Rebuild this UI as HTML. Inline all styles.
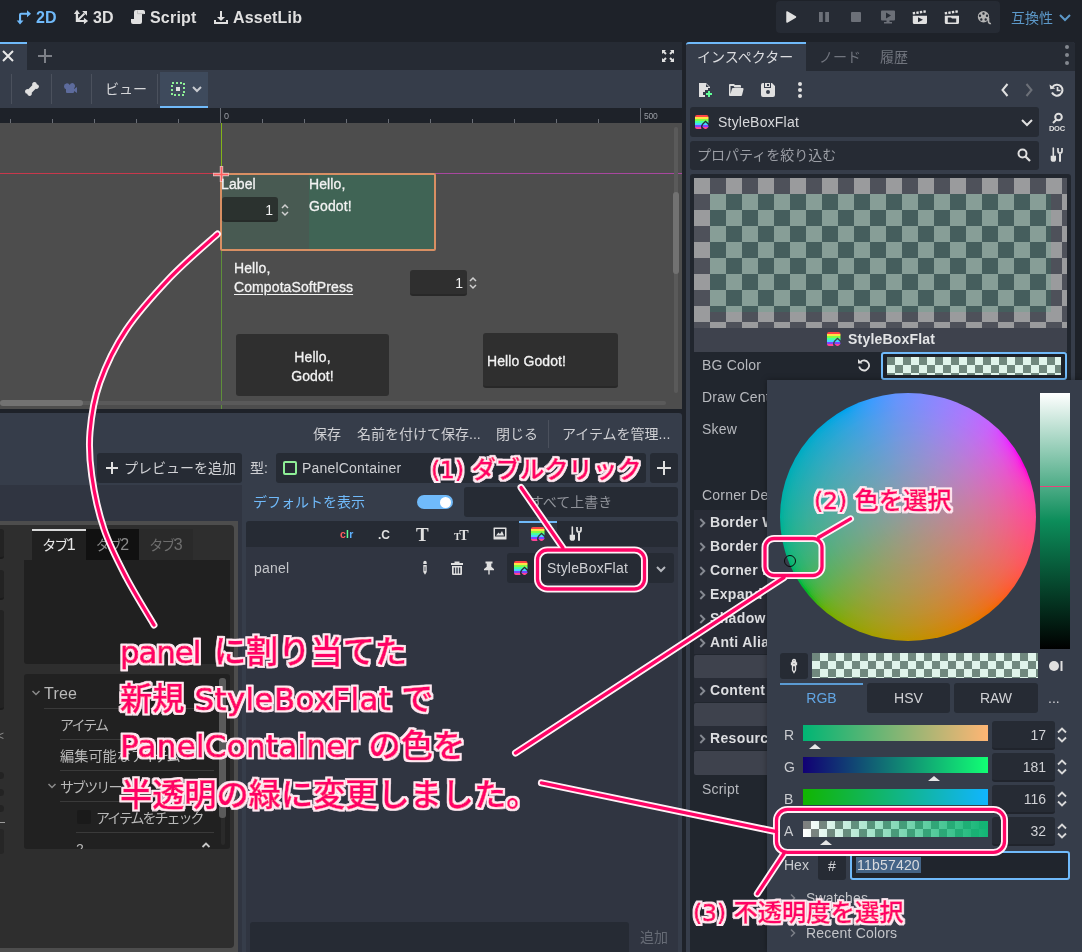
<!DOCTYPE html>
<html lang="ja"><head><meta charset="utf-8"><title>Godot StyleBoxFlat</title>
<style>
html,body{margin:0;padding:0}
body{width:1082px;height:952px;overflow:hidden;background:#1e2229;position:relative;font-family:"Liberation Sans","Noto Sans CJK JP",sans-serif;font-size:14px;color:#d5d6d9}
div,svg{position:absolute;box-sizing:border-box}
.t{white-space:nowrap}
.clip{overflow:hidden}
svg{overflow:visible}
svg text{font-family:"Liberation Sans","Noto Sans CJK JP",sans-serif}
</style></head><body><div id="root" style="left:0;top:0;width:1082px;height:952px;will-change:transform">
<svg style="left:15px;top:9px;" width="16" height="16" viewBox="0 0 16 16"><path d="M12 1.200l4 3.500-4 3.500V5.800H6.100v5.700H8.500L5 15.400 1.700 11.500H4V5.700a2 2 0 0 1 2-2h6z" fill="#70bafa"/></svg>
<div class="t" style="top:7.0px;height:22px;line-height:22px;font-size:16px;color:#70bafa;font-weight:700;left:36px;">2D</div>
<svg style="left:73px;top:9px;" width="16" height="16" viewBox="0 0 16 16"><path d="M4 .700L.900 5h1.900v8h8.100v2.300L15.100 12l-4.200-3.200v2.100H5.100V5H7z" fill="#e0e0e0"/><path d="M5 11l6.500-6.500" stroke="#e0e0e0" stroke-width="2"/><path d="M14 1.900H9.100L14 6.800z" fill="#e0e0e0"/></svg>
<div class="t" style="top:7.0px;height:22px;line-height:22px;font-size:16px;color:#e0e0e0;font-weight:700;left:93px;">3D</div>
<svg style="left:130px;top:9px;" width="16" height="16" viewBox="0 0 16 16"><path d="M6 1a2 2 0 0 0-2 2v7H1v3a2 2 0 0 0 2 2h7a2 2 0 0 0 2-2V5h3V3a2 2 0 0 0-2-2z" fill="#e0e0e0"/><path d="M7.500 1.500v3.200H14" stroke="#b5b5b5" stroke-width=".8" fill="none"/></svg>
<div class="t" style="top:7.0px;height:22px;line-height:22px;font-size:16px;color:#e0e0e0;font-weight:700;letter-spacing:.2px;left:150px;">Script</div>
<svg style="left:213px;top:10px;" width="16" height="16" viewBox="0 0 16 16"><path d="M7 1v6H4l4 4 4-4H9V1zM1 10v4h14v-4h-2v2H3v-2z" fill="#e0e0e0"/></svg>
<div class="t" style="top:7.0px;height:22px;line-height:22px;font-size:16px;color:#e0e0e0;font-weight:700;letter-spacing:.2px;left:233px;">AssetLib</div>
<div style="left:776px;top:1px;width:224px;height:32px;background:#262b34;border-radius:4px;"></div>
<svg style="left:783px;top:9px;" width="16" height="16" viewBox="0 0 16 16"><path d="M4 3v10l8.500-5z" fill="#e0e0e0" stroke="#e0e0e0" stroke-linejoin="round" stroke-width="1.500"/></svg>
<svg style="left:816px;top:9px;" width="16" height="16" viewBox="0 0 16 16"><path d="M3 3h3.800v10H3zM9.200 3H13v10H9.200z" fill="#6c7078"/></svg>
<svg style="left:848px;top:9px;" width="16" height="16" viewBox="0 0 16 16"><rect x="3" y="3" width="10" height="10" rx="1" fill="#6c7078"/></svg>
<svg style="left:880px;top:9px;" width="16" height="16" viewBox="0 0 16 16"><path d="M1 2.500a1 1 0 0 1 1-1h12a1 1 0 0 1 1 1v8a1 1 0 0 1-1 1H9.500v1.500H12v1.500H4V13h2.500v-1.500H2a1 1 0 0 1-1-1zM6 3.500v6l5-3z" fill="#6c7078"/></svg>
<svg style="left:912px;top:9px;" width="16" height="16" viewBox="0 0 16 16"><g transform="rotate(-9 1 6)"><rect x="1.0" y="3.200" width="2.400" height="2.400" fill="#e0e0e0"/><rect x="4.6" y="3.200" width="2.400" height="2.400" fill="#e0e0e0"/><rect x="8.2" y="3.200" width="2.400" height="2.400" fill="#e0e0e0"/><rect x="11.8" y="3.200" width="2.400" height="2.400" fill="#e0e0e0"/></g><path d="M.800 6.800H15v6.600a1.500 1.500 0 0 1-1.500 1.500H2.300a1.500 1.500 0 0 1-1.500-1.500zM6 8.300v5l5-2.500z" fill="#e0e0e0" fill-rule="evenodd"/></svg>
<svg style="left:944px;top:9px;" width="16" height="16" viewBox="0 0 16 16"><g transform="rotate(-9 1 6)"><rect x="1.0" y="3.200" width="2.400" height="2.400" fill="#e0e0e0"/><rect x="4.6" y="3.200" width="2.400" height="2.400" fill="#e0e0e0"/><rect x="8.2" y="3.200" width="2.400" height="2.400" fill="#e0e0e0"/><rect x="11.8" y="3.200" width="2.400" height="2.400" fill="#e0e0e0"/></g><path d="M.800 6.800H15v6.600a1.500 1.500 0 0 1-1.500 1.500H2.300a1.500 1.500 0 0 1-1.500-1.500zM3.800 8.500v5h8.400v-4H8l-1-1z" fill="#e0e0e0" fill-rule="evenodd"/></svg>
<svg style="left:976px;top:9px;" width="16" height="16" viewBox="0 0 16 16"><path d="M7.500 2a5.700 5.700 0 1 0 0 11.400 5.700 5.700 0 0 0 0-11.400zM7.500 3.300a1.200 1.200 0 1 1 0 2.400 1.200 1.200 0 0 1 0-2.400zM4 5.500a1.200 1.200 0 1 1 0 2.400 1.200 1.200 0 0 1 0-2.400zM11 5.500a1.200 1.200 0 1 1 0 2.400 1.200 1.200 0 0 1 0-2.400zM5.300 9.300a1.200 1.200 0 1 1 0 2.400 1.200 1.200 0 0 1 0-2.400zM9.700 9.300a1.200 1.200 0 1 1 0 2.400 1.200 1.200 0 0 1 0-2.400z" fill="#b4b4b4" fill-rule="evenodd"/><path d="M12.500 9v3.500a2 2 0 0 0 2.500 2" stroke="#b4b4b4" stroke-width="1.600" fill="none"/></svg>
<div class="t" style="top:7.0px;height:22px;line-height:22px;font-size:14px;color:#5c98c8;left:1011px;">互換性</div>
<svg style="left:1058px;top:13px;" width="14" height="10" viewBox="0 0 14 10"><path d="M2 2l5 5 5-5" stroke="#5c98c8" stroke-width="2" fill="none"/></svg>
<div style="left:0px;top:42px;width:682px;height:28px;background:#262b34;"></div>
<div style="left:0px;top:42px;width:27px;height:28px;background:#363d4a;border-top:2px solid #70bafa;"></div>
<svg style="left:1px;top:49px;" width="14" height="14" viewBox="0 0 14 14"><path d="M2 2l10 10M12 2L2 12" stroke="#e8e8e8" stroke-width="2" fill="none"/></svg>
<svg style="left:38px;top:49px;" width="14" height="14" viewBox="0 0 14 14"><path d="M7 0v14M0 7h14" stroke="#7d8087" stroke-width="2" fill="none"/></svg>
<svg style="left:661px;top:49px;" width="14" height="14" viewBox="0 0 14 14"><path d="M1 1h4L3.700 2.300 5.700 4.300 4.300 5.700 2.300 3.700 1 5zM13 1v4l-1.300-1.300-2 2-1.400-1.400 2-2L9 1zM1 13V9l1.300 1.300 2-2 1.400 1.400-2 2L5 13zM13 13H9l1.300-1.300-2-2 1.400-1.400 2 2L13 9z" fill="#e0e0e0"/></svg>
<div style="left:0px;top:70px;width:682px;height:38px;background:#363d4a;"></div>
<div style="left:11px;top:74px;width:1px;height:30px;background:#4b515d;"></div>
<div style="left:51px;top:74px;width:1px;height:30px;background:#4b515d;"></div>
<div style="left:91px;top:74px;width:1px;height:30px;background:#4b515d;"></div>
<div style="left:157px;top:74px;width:1px;height:30px;background:#4b515d;"></div>
<svg style="left:24px;top:81px;" width="16" height="16" viewBox="0 0 16 16"><path d="M10.478 1.001a2.500 2.500 0 0 0-2.210 3.330L4.331 8.268a2.500 2.500 0 0 0-3.330 2.210 2.500 2.500 0 0 0 2.150 2.370 2.500 2.500 0 0 0 2.370 2.150 2.500 2.500 0 0 0 2.210-3.330l3.937-3.937a2.500 2.500 0 0 0 3.330-2.210 2.500 2.500 0 0 0-2.150-2.370 2.500 2.500 0 0 0-2.370-2.150z" fill="#e0e0e0"/></svg>
<svg style="left:63px;top:81px;" width="16" height="16" viewBox="0 0 16 16"><path d="M9.500 2a3 3 0 0 0-2.800 2A3 3 0 0 0 1 5.500a3 3 0 0 0 2 2.800V11a1 1 0 0 0 1 1h6a1 1 0 0 0 1-1v-1l3 2V6l-3 2V7.230A3 3 0 0 0 9.500 2z" fill="#5d6b9c"/></svg>
<div class="t" style="top:79.0px;height:20px;line-height:20px;font-size:14px;color:#d4d5d8;left:105px;">ビュー</div>
<div style="left:160px;top:72px;width:48px;height:36px;background:#3e4a5c;border-bottom:2px solid #70bafa;"></div>
<svg style="left:171px;top:82px;" width="14" height="14" viewBox="0 0 14 14"><rect x="1" y="1" width="12" height="12" fill="none" stroke="#8eef97" stroke-width="2" stroke-dasharray="2 2"/><rect x="5" y="5" width="4" height="4" fill="#e0e0e0"/></svg>
<svg style="left:191px;top:85px;" width="12" height="8" viewBox="0 0 12 8"><path d="M2 2l4 4 4-4" stroke="#c8cbd0" stroke-width="2" fill="none"/></svg>
<div style="left:0px;top:108px;width:682px;height:15px;background:#1e2229;"></div>
<div style="left:10px;top:119px;width:1px;height:4px;background:#6b6f77;"></div>
<div style="left:52px;top:119px;width:1px;height:4px;background:#6b6f77;"></div>
<div style="left:94px;top:119px;width:1px;height:4px;background:#6b6f77;"></div>
<div style="left:136px;top:119px;width:1px;height:4px;background:#6b6f77;"></div>
<div style="left:178px;top:119px;width:1px;height:4px;background:#6b6f77;"></div>
<div style="left:220px;top:108px;width:1px;height:15px;background:#6b6f77;"></div>
<div style="left:262px;top:119px;width:1px;height:4px;background:#6b6f77;"></div>
<div style="left:304px;top:119px;width:1px;height:4px;background:#6b6f77;"></div>
<div style="left:346px;top:119px;width:1px;height:4px;background:#6b6f77;"></div>
<div style="left:388px;top:119px;width:1px;height:4px;background:#6b6f77;"></div>
<div style="left:430px;top:119px;width:1px;height:4px;background:#6b6f77;"></div>
<div style="left:472px;top:119px;width:1px;height:4px;background:#6b6f77;"></div>
<div style="left:514px;top:119px;width:1px;height:4px;background:#6b6f77;"></div>
<div style="left:556px;top:119px;width:1px;height:4px;background:#6b6f77;"></div>
<div style="left:598px;top:119px;width:1px;height:4px;background:#6b6f77;"></div>
<div style="left:640px;top:108px;width:1px;height:15px;background:#6b6f77;"></div>
<div class="t" style="top:111.0px;height:10px;line-height:10px;font-size:9px;color:#9b9ea5;left:224px;">0</div>
<div class="t" style="top:111.0px;height:10px;line-height:10px;font-size:8.5px;color:#9b9ea5;left:644px;letter-spacing:-.2px;">500</div>
<div class="clip" style="left:0px;top:123px;width:682px;height:286px;background:#4d4d4d;"></div>
<div style="left:0px;top:173px;width:221px;height:1px;background:#c8384c;"></div>
<div style="left:435px;top:173px;width:247px;height:1px;background:#a8479f;"></div>
<div style="left:221px;top:123px;width:1px;height:286px;background:#5f8f3a;"></div>
<div style="left:221px;top:123px;width:1px;height:50px;background:#83b319;"></div>
<div style="left:221px;top:174px;width:214px;height:76px;background:#485a52;"></div>
<div style="left:309px;top:174px;width:126px;height:76px;background:#406455;"></div>
<div style="left:220px;top:173px;width:216px;height:78px;border:2px solid #d88f63;border-radius:2px;"></div>
<svg style="left:213px;top:166px;" width="16" height="16" viewBox="0 0 16 16"><path d="M8.500 0v16M0 8.500h16" stroke="#ffd9d9" stroke-opacity=".8" stroke-width="3.400"/><path d="M8.500 .700v14.600M.700 8.500h14.600" stroke="#ff5f5f" stroke-width="1.600"/></svg>
<div class="t" style="top:175.0px;height:18px;line-height:18px;font-size:14px;color:#f2f2f2;left:221px;letter-spacing:.1px;-webkit-text-stroke:.3px #f2f2f2;">Label</div>
<div class="t" style="top:175.0px;height:18px;line-height:18px;font-size:14px;color:#f2f2f2;left:309px;letter-spacing:.1px;-webkit-text-stroke:.3px #f2f2f2;">Hello,</div>
<div class="t" style="top:197.0px;height:18px;line-height:18px;font-size:14px;color:#f2f2f2;left:309px;letter-spacing:.1px;-webkit-text-stroke:.3px #f2f2f2;">Godot!</div>
<div style="left:222px;top:197px;width:56px;height:25px;background:#2b322f;border-radius:3px;border-bottom:2px solid #262b29;"></div>
<div class="t" style="top:201.0px;height:18px;line-height:18px;font-size:14px;color:#f2f2f2;right:809px;text-align:right;">1</div>
<svg style="left:280px;top:203px;" width="10" height="14" viewBox="0 0 10 14"><path d="M2 5l3-3 3 3M2 9l3 3 3-3" stroke="#d0d0d0" stroke-width="1.500" fill="none"/></svg>
<div class="t" style="top:259.0px;height:18px;line-height:18px;font-size:14px;color:#f2f2f2;left:234px;letter-spacing:.1px;-webkit-text-stroke:.3px #f2f2f2;">Hello,</div>
<div class="t" style="top:278.0px;height:18px;line-height:18px;font-size:14px;color:#f2f2f2;left:234px;text-decoration:underline;text-underline-offset:2px;letter-spacing:.1px;-webkit-text-stroke:.3px #f2f2f2;">CompotaSoftPress</div>
<div style="left:410px;top:270px;width:57px;height:26px;background:#2f2f2f;border-radius:3px;border-bottom:2px solid #282828;"></div>
<div class="t" style="top:274.0px;height:18px;line-height:18px;font-size:14px;color:#f2f2f2;right:619px;text-align:right;">1</div>
<svg style="left:468px;top:276px;" width="10" height="14" viewBox="0 0 10 14"><path d="M2 5l3-3 3 3M2 9l3 3 3-3" stroke="#d0d0d0" stroke-width="1.500" fill="none"/></svg>
<div style="left:236px;top:334px;width:153px;height:62px;background:#2f2f2f;border-radius:3px;"></div>
<div class="t" style="top:348.0px;height:18px;line-height:18px;font-size:14px;color:#f2f2f2;left:112.5px;width:400px;text-align:center;letter-spacing:.1px;-webkit-text-stroke:.3px #f2f2f2;">Hello,</div>
<div class="t" style="top:367.0px;height:18px;line-height:18px;font-size:14px;color:#f2f2f2;left:112.5px;width:400px;text-align:center;letter-spacing:.1px;-webkit-text-stroke:.3px #f2f2f2;">Godot!</div>
<div style="left:483px;top:333px;width:135px;height:55px;background:#2f2f2f;border-radius:3px;border-bottom:2px solid #282828;"></div>
<div class="t" style="top:352.0px;height:18px;line-height:18px;font-size:14px;color:#f2f2f2;left:487px;letter-spacing:.1px;-webkit-text-stroke:.3px #f2f2f2;">Hello Godot!</div>
<div style="left:674px;top:127px;width:4px;height:266px;background:#5a5a5a;border-radius:2px;"></div>
<div style="left:673px;top:192px;width:6px;height:82px;background:#727272;border-radius:3px;"></div>
<div style="left:0px;top:401px;width:666px;height:4px;background:#5a5a5a;border-radius:2px;"></div>
<div style="left:0px;top:400px;width:83px;height:6px;background:#727272;border-radius:3px;"></div>
<div style="left:0px;top:413px;width:682px;height:545px;background:#363d4a;border-radius:0 3px 0 0;"></div>
<div class="t" style="top:424.0px;height:20px;line-height:20px;font-size:14px;color:#cfd0d4;left:313px;">保存</div>
<div class="t" style="top:424.0px;height:20px;line-height:20px;font-size:14px;color:#cfd0d4;left:357px;">名前を付けて保存...</div>
<div class="t" style="top:424.0px;height:20px;line-height:20px;font-size:14px;color:#cfd0d4;left:496px;">閉じる</div>
<div style="left:548px;top:420px;width:1px;height:28px;background:#4b515d;"></div>
<div class="t" style="top:424.0px;height:20px;line-height:20px;font-size:14px;color:#cfd0d4;left:562px;">アイテムを管理...</div>
<div style="left:0px;top:485px;width:242px;height:467px;background:#303541;"></div>
<div style="left:97px;top:453px;width:145px;height:30px;background:#262b34;border-radius:3px;"></div>
<svg style="left:105px;top:461px;" width="14" height="14" viewBox="0 0 14 14"><path d="M7 1v12M1 7h12" stroke="#e0e0e0" stroke-width="2" fill="none"/></svg>
<div class="t" style="top:458.0px;height:20px;line-height:20px;font-size:14px;color:#cfd0d4;left:124px;">プレビューを追加</div>
<div style="left:0px;top:521px;width:238px;height:431px;background:#4d4d4d;"></div>
<div style="left:0px;top:525px;width:234px;height:423px;background:#2e2e2e;border-radius:0 4px 4px 0;"></div>
<div style="left:-4px;top:529px;width:8px;height:30px;background:#232323;border-radius:3px;border-bottom:2px solid #1c1c1c;"></div>
<div style="left:-4px;top:570px;width:8px;height:30px;background:#232323;border-radius:3px;border-bottom:2px solid #1c1c1c;"></div>
<div style="left:-4px;top:610px;width:8px;height:100px;background:#232323;border-radius:3px;border-bottom:2px solid #1c1c1c;"></div>
<div class="t" style="top:729.0px;height:14px;line-height:14px;font-size:12px;color:#8a8a8a;letter-spacing:.2px;left:-3px;">&lt;</div>
<div style="left:-4px;top:772.0px;width:8px;height:7px;background:#232323;border-radius:4px;"></div>
<div style="left:-4px;top:788.5px;width:8px;height:7px;background:#232323;border-radius:4px;"></div>
<div style="left:-4px;top:804.5px;width:8px;height:7px;background:#232323;border-radius:4px;"></div>
<div style="left:0px;top:821.5px;width:5px;height:1px;background:#9a9a9a;"></div>
<div style="left:-4px;top:829px;width:8px;height:25px;background:#262626;border-radius:3px;"></div>
<div style="left:32px;top:529px;width:54px;height:31px;background:#202020;border-top:2px solid #d8d8d8;"></div>
<div style="left:86px;top:529px;width:53px;height:31px;background:#111111;"></div>
<div style="left:139px;top:529px;width:54px;height:31px;background:#2a2a2a;"></div>
<div class="t" style="top:534.0px;height:22px;line-height:22px;font-size:14px;color:#e8e8e8;left:29.0px;width:60px;text-align:center;"><span style="letter-spacing:-1.800px">タブ</span><span style="font-size:16px">1</span></div>
<div class="t" style="top:534.0px;height:22px;line-height:22px;font-size:14px;color:#8a8a8a;left:82.5px;width:60px;text-align:center;"><span style="letter-spacing:-1.800px">タブ</span><span style="font-size:16px">2</span></div>
<div class="t" style="top:534.0px;height:22px;line-height:22px;font-size:14px;color:#6e6e6e;left:136.0px;width:60px;text-align:center;"><span style="letter-spacing:-1.800px">タブ</span><span style="font-size:16px">3</span></div>
<div style="left:24px;top:560px;width:206px;height:104px;background:#202020;border-radius:0 0 3px 3px;"></div>
<div class="clip" style="left:24px;top:674px;width:206px;height:175px;background:#212121;border-radius:3px;"><div class="t" style="left:52px;top:164px;height:22px;line-height:22px;font-size:14px;color:#b9b9b9">2</div></div>
<svg style="left:31px;top:689px;" width="10" height="8" viewBox="0 0 10 8"><path d="M1.500 2l3.500 3.500L8.500 2" stroke="#8a8a8a" stroke-width="1.500" fill="none"/></svg>
<div class="t" style="top:683.0px;height:22px;line-height:22px;font-size:16px;color:#b9b9b9;letter-spacing:.2px;left:44px;">Tree</div>
<div class="t" style="top:714.0px;height:22px;line-height:22px;font-size:14px;color:#b9b9b9;left:60px;letter-spacing:-1.9px;">アイテム</div>
<div class="t" style="top:745.0px;height:22px;line-height:22px;font-size:14.2px;color:#b9b9b9;left:60px;">編集可能な<span style="letter-spacing:-1.9px">アイテム</span></div>
<svg style="left:47px;top:782px;" width="10" height="8" viewBox="0 0 10 8"><path d="M1.500 2l3.500 3.500L8.500 2" stroke="#8a8a8a" stroke-width="1.500" fill="none"/></svg>
<div class="t" style="top:776.0px;height:22px;line-height:22px;font-size:14px;color:#b9b9b9;left:60px;letter-spacing:-1.9px;">サブツリー</div>
<div style="left:77px;top:810px;width:14px;height:14px;background:#1a1a1a;border-radius:2px;"></div>
<div class="t" style="top:807.0px;height:22px;line-height:22px;font-size:14px;color:#b9b9b9;left:96px;letter-spacing:-2px;">アイテムをチェック</div>
<div style="left:44px;top:708px;width:170px;height:1px;background:#3a3a3a;"></div>
<div style="left:60px;top:739px;width:154px;height:1px;background:#3a3a3a;"></div>
<div style="left:60px;top:770px;width:154px;height:1px;background:#3a3a3a;"></div>
<div style="left:60px;top:801px;width:154px;height:1px;background:#3a3a3a;"></div>
<div style="left:76px;top:832px;width:138px;height:1px;background:#3a3a3a;"></div>
<svg style="left:201px;top:841px;" width="10" height="8" viewBox="0 0 10 8"><path d="M1.500 6l3.500-3.500L8.500 6" stroke="#c8c8c8" stroke-width="1.800" fill="none"/></svg>
<div style="left:221px;top:680px;width:4px;height:165px;background:#2a2a2a;border-radius:2px;"></div>
<div style="left:219px;top:678px;width:7px;height:140px;background:#5a5a5a;border-radius:3px;"></div>
<div class="t" style="top:458.0px;height:20px;line-height:20px;font-size:14px;color:#cfd0d4;left:250px;">型:</div>
<div style="left:276px;top:453px;width:370px;height:30px;background:#262b34;border-radius:3px;"></div>
<div style="left:283px;top:461px;width:14px;height:14px;border:2px solid #8eef97;border-radius:2px;"></div>
<div class="t" style="top:458.0px;height:20px;line-height:20px;font-size:14px;color:#cfd0d4;letter-spacing:.2px;left:302px;">PanelContainer</div>
<div style="left:650px;top:453px;width:28px;height:30px;background:#262b34;border-radius:3px;"></div>
<svg style="left:657px;top:461px;" width="14" height="14" viewBox="0 0 14 14"><path d="M7 0v14M0 7h14" stroke="#e0e0e0" stroke-width="2" fill="none"/></svg>
<div class="t" style="top:492.0px;height:20px;line-height:20px;font-size:14px;color:#70bafa;left:253px;">デフォルトを表示</div>
<div style="left:417px;top:495px;width:36px;height:14px;background:#70bafa;border-radius:7px;"></div>
<div style="left:440px;top:496.5px;width:11px;height:11px;background:#ffffff;border-radius:6px;"></div>
<div style="left:464px;top:487px;width:214px;height:30px;background:#262b34;border-radius:3px;"></div>
<div class="t" style="top:492.0px;height:20px;line-height:20px;font-size:14px;color:#8f9299;left:471.0px;width:200px;text-align:center;">すべて上書き</div>
<div style="left:246px;top:521px;width:432px;height:26px;background:#262b34;border-radius:3px 3px 0 0;"></div>
<div style="left:246px;top:547px;width:432px;height:405px;background:#303541;"></div>
<div style="left:519px;top:521px;width:38px;height:26px;background:#303541;border-top:2px solid #70bafa;"></div>
<svg style="left:340px;top:526px;" width="16" height="16" viewBox="0 0 16 16"><text x="0" y="12" font-size="10.500" font-weight="700" letter-spacing="0.2"><tspan fill="#ff5f5f">c</tspan><tspan fill="#5fff97">l</tspan><tspan fill="#5fb2ff">r</tspan></text></svg>
<svg style="left:378px;top:526px;" width="16" height="16" viewBox="0 0 16 16"><text x="0" y="13" font-size="12" font-weight="700" fill="#e0e0e0">.C</text></svg>
<svg style="left:416px;top:526px;" width="16" height="16" viewBox="0 0 16 16"><text x="0" y="14.500" font-size="19" font-weight="700" style="font-family:'Liberation Serif',serif" fill="#e0e0e0">T</text></svg>
<svg style="left:454px;top:526px;" width="16" height="16" viewBox="0 0 16 16"><text x="0" y="14" style="font-family:'Liberation Serif',serif" fill="#e0e0e0"><tspan font-size="10" font-weight="700">T</tspan><tspan font-size="14" dx="-1.500" font-weight="700">T</tspan></text></svg>
<svg style="left:492px;top:526px;" width="16" height="16" viewBox="0 0 16 16"><path d="M2 1.500h12a.5.5 0 0 1 .5.500v11a.5.500 0 0 1-.5.500H2a.5.500 0 0 1-.5-.5V2a.5.500 0 0 1 .5-.5zM3 3v7.500h10V3zM4 9.500l2.500-3 1.500 1.500 2-3 2 4.500z" fill="#e0e0e0" fill-rule="evenodd"/></svg>
<svg style="left:530px;top:526px;" width="16" height="16" viewBox="0 0 16 16"><defs><clipPath id="sa530526"><path d="M3 1a2 2 0 0 0-2 2v10a2 2 0 0 0 2 2h4.586a4.500 4.500 0 0 1-.586-2.216 4.500 4.500 0 0 1 1.318-3.182L11.500 6.420l2.682 2.682a4.500 4.500 0 0 1 .318.357V3a2 2 0 0 0-2-2z"/></clipPath><clipPath id="sb530526"><path d="M11.500 8.200L9.530 10.170a2.790 2.790 0 0 0 0 3.940 2.790 2.790 0 0 0 3.940 0 2.790 2.790 0 0 0 0-3.940z"/></clipPath></defs><g clip-path="url(#sa530526)"><path d="M1 1h14v2.100H1z" fill="#ff4545"/><path d="M1 3h14v2.100H1z" fill="#ffe345"/><path d="M1 5h14v2.100H1z" fill="#80ff45"/><path d="M1 7h14v2.100H1z" fill="#45ffa2"/><path d="M1 9h14v2.100H1z" fill="#45d7ff"/><path d="M1 11h14v2.100H1z" fill="#8045ff"/><path d="M1 13h14v2.100H1z" fill="#ff4596"/></g><g clip-path="url(#sb530526)"><path d="M1 1h14v2.100H1z" fill="#ff4545"/><path d="M1 3h14v2.100H1z" fill="#ffe345"/><path d="M1 5h14v2.100H1z" fill="#80ff45"/><path d="M1 7h14v2.100H1z" fill="#45ffa2"/><path d="M1 9h14v2.100H1z" fill="#45d7ff"/><path d="M1 11h14v2.100H1z" fill="#8045ff"/><path d="M1 13h14v2.100H1z" fill="#ff4596"/></g></svg>
<svg style="left:568px;top:526px;" width="16" height="16" viewBox="0 0 16 16"><path d="M4.300 1v8" stroke="#e0e0e0" stroke-width="1.600" stroke-linecap="round"/><path d="M1.700 8.800h5.300v3.400a2.600 2.600 0 0 1-5.300 0z" fill="#e0e0e0"/><path d="M11 6.500v8.200" stroke="#e0e0e0" stroke-width="2"/><path d="M9 1v3a2 2 0 0 0 4 0V1" stroke="#e0e0e0" stroke-width="1.700" fill="none"/></svg>
<div class="t" style="top:558.0px;height:20px;line-height:20px;font-size:14px;color:#c3c5c9;letter-spacing:.2px;left:254px;">panel</div>
<svg style="left:417px;top:560px;" width="16" height="16" viewBox="0 0 16 16"><path d="M6.300 2.500a1.700 1.700 0 0 1 3.400 0V4H6.300zM6.300 5h3.400v7L8 14.800 6.300 12zM7.600 6.500v4.500h.8V6.500z" fill="#e0e0e0" fill-rule="evenodd"/></svg>
<svg style="left:449px;top:560px;" width="16" height="16" viewBox="0 0 16 16"><path d="M5.500 1.500h5v1.500h3.500v2H2V3h3.500zM3 6h10v8a1 1 0 0 1-1 1H4a1 1 0 0 1-1-1zM4.700 7.500v6h1.400v-6zM7.300 7.500v6h1.400v-6zM9.900 7.500v6h1.400v-6z" fill="#e0e0e0" fill-rule="evenodd"/></svg>
<svg style="left:481px;top:560px;" width="16" height="16" viewBox="0 0 16 16"><path d="M4.500 1.500h7v2h-1.200v3.300L13 9v1.300H8.700V14.500h-1.400V10.300H3V9l2.700-2.200V3.500H4.500z" fill="#e0e0e0"/></svg>
<div style="left:507px;top:553px;width:167px;height:30px;background:#262b34;border-radius:3px;"></div>
<svg style="left:513px;top:560px;" width="16" height="16" viewBox="0 0 16 16"><defs><clipPath id="sa513560"><path d="M3 1a2 2 0 0 0-2 2v10a2 2 0 0 0 2 2h4.586a4.500 4.500 0 0 1-.586-2.216 4.500 4.500 0 0 1 1.318-3.182L11.500 6.420l2.682 2.682a4.500 4.500 0 0 1 .318.357V3a2 2 0 0 0-2-2z"/></clipPath><clipPath id="sb513560"><path d="M11.500 8.200L9.530 10.170a2.790 2.790 0 0 0 0 3.940 2.790 2.790 0 0 0 3.940 0 2.790 2.790 0 0 0 0-3.940z"/></clipPath></defs><g clip-path="url(#sa513560)"><path d="M1 1h14v2.100H1z" fill="#ff4545"/><path d="M1 3h14v2.100H1z" fill="#ffe345"/><path d="M1 5h14v2.100H1z" fill="#80ff45"/><path d="M1 7h14v2.100H1z" fill="#45ffa2"/><path d="M1 9h14v2.100H1z" fill="#45d7ff"/><path d="M1 11h14v2.100H1z" fill="#8045ff"/><path d="M1 13h14v2.100H1z" fill="#ff4596"/></g><g clip-path="url(#sb513560)"><path d="M1 1h14v2.100H1z" fill="#ff4545"/><path d="M1 3h14v2.100H1z" fill="#ffe345"/><path d="M1 5h14v2.100H1z" fill="#80ff45"/><path d="M1 7h14v2.100H1z" fill="#45ffa2"/><path d="M1 9h14v2.100H1z" fill="#45d7ff"/><path d="M1 11h14v2.100H1z" fill="#8045ff"/><path d="M1 13h14v2.100H1z" fill="#ff4596"/></g></svg>
<div class="t" style="top:558.0px;height:20px;line-height:20px;font-size:14px;color:#cfd0d4;letter-spacing:.2px;left:547px;">StyleBoxFlat</div>
<svg style="left:655px;top:565px;" width="12" height="8" viewBox="0 0 12 8"><path d="M2 2l4 4 4-4" stroke="#b4b7bd" stroke-width="2" fill="none"/></svg>
<div style="left:250px;top:922px;width:379px;height:30px;background:#262b34;border-radius:3px 3px 0 0;"></div>
<div class="t" style="top:927.0px;height:20px;line-height:20px;font-size:14px;color:#666b75;left:640px;">追加</div>
<div style="left:686px;top:42px;width:389px;height:910px;background:#363d4a;border-radius:3px 3px 0 0;"></div>
<div style="left:686px;top:42px;width:389px;height:29px;background:#262b34;border-radius:3px 3px 0 0;"></div>
<div style="left:686px;top:42px;width:120px;height:29px;background:#363d4a;border-top:2px solid #70bafa;border-radius:3px 0 0 0;"></div>
<div class="t" style="top:47.0px;height:20px;line-height:20px;font-size:14px;color:#dcdde0;left:697px;">インスペクター</div>
<div class="t" style="top:47.0px;height:20px;line-height:20px;font-size:14px;color:#71757e;left:819px;">ノード</div>
<div class="t" style="top:47.0px;height:20px;line-height:20px;font-size:14px;color:#71757e;left:880px;">履歴</div>
<div style="left:1065px;top:45px;width:4px;height:4px;background:#84888f;border-radius:2px;"></div>
<div style="left:1065px;top:53px;width:4px;height:4px;background:#84888f;border-radius:2px;"></div>
<div style="left:1065px;top:61px;width:4px;height:4px;background:#84888f;border-radius:2px;"></div>
<svg style="left:697px;top:82px;" width="16" height="16" viewBox="0 0 16 16"><path d="M2 1v14h6v-2H6v-3h2V8h3V6h2V5L9 1zM9 2l3 3H9z" fill="#e0e0e0" fill-rule="evenodd"/><path d="M11 9v2H9v2h2v2h2v-2h2v-2h-2V9z" fill="#5fff97"/></svg>
<svg style="left:728px;top:82px;" width="16" height="16" viewBox="0 0 16 16"><path d="M2 2a1 1 0 0 0-1 1v10a1 1 0 0 0 1 1h11a1 1 0 0 0 1-.8l1.500-6A1 1 0 0 0 14.500 6H5a1 1 0 0 0-1 .8L2.500 12V4h3l1 1.500H13V4a1 1 0 0 0-1-1H7L6 2z" fill="#e0e0e0"/></svg>
<svg style="left:760px;top:82px;" width="16" height="16" viewBox="0 0 16 16"><path d="M3 1a2 2 0 0 0-2 2v10a2 2 0 0 0 2 2h10a2 2 0 0 0 2-2V4l-3-3h-1v5H4V1zM5 1v4h5V1zM7 2h2v2H7zM8 8a2 2 0 1 1 0 4 2 2 0 0 1 0-4z" fill="#e0e0e0" fill-rule="evenodd"/></svg>
<div style="left:798px;top:82px;width:4px;height:4px;background:#e0e0e0;border-radius:2px;"></div>
<div style="left:798px;top:88px;width:4px;height:4px;background:#e0e0e0;border-radius:2px;"></div>
<div style="left:798px;top:94px;width:4px;height:4px;background:#e0e0e0;border-radius:2px;"></div>
<svg style="left:998px;top:82px;" width="14" height="16" viewBox="0 0 14 16"><path d="M9.500 2L4.500 8l5 6" stroke="#e0e0e0" stroke-width="2" fill="none"/></svg>
<svg style="left:1022px;top:82px;" width="14" height="16" viewBox="0 0 14 16"><path d="M4.500 2l5 6-5 6" stroke="#6c7078" stroke-width="2" fill="none"/></svg>
<svg style="left:1049px;top:82px;" width="16" height="16" viewBox="0 0 16 16"><path d="M3.500 5A5.500 5.500 0 1 1 3 10.500" stroke="#e0e0e0" stroke-width="2" fill="none"/><path d="M1 2v5h5z" fill="#e0e0e0" transform="rotate(-10 3 5)"/><path d="M8.500 5v3.500H11.500" stroke="#e0e0e0" stroke-width="1.700" fill="none"/></svg>
<div style="left:690px;top:107px;width:349px;height:30px;background:#262b34;border-radius:3px;"></div>
<svg style="left:694px;top:114px;" width="16" height="16" viewBox="0 0 16 16"><defs><clipPath id="sa694114"><path d="M3 1a2 2 0 0 0-2 2v10a2 2 0 0 0 2 2h4.586a4.500 4.500 0 0 1-.586-2.216 4.500 4.500 0 0 1 1.318-3.182L11.500 6.420l2.682 2.682a4.500 4.500 0 0 1 .318.357V3a2 2 0 0 0-2-2z"/></clipPath><clipPath id="sb694114"><path d="M11.500 8.200L9.530 10.170a2.790 2.790 0 0 0 0 3.940 2.790 2.790 0 0 0 3.940 0 2.790 2.790 0 0 0 0-3.940z"/></clipPath></defs><g clip-path="url(#sa694114)"><path d="M1 1h14v2.100H1z" fill="#ff4545"/><path d="M1 3h14v2.100H1z" fill="#ffe345"/><path d="M1 5h14v2.100H1z" fill="#80ff45"/><path d="M1 7h14v2.100H1z" fill="#45ffa2"/><path d="M1 9h14v2.100H1z" fill="#45d7ff"/><path d="M1 11h14v2.100H1z" fill="#8045ff"/><path d="M1 13h14v2.100H1z" fill="#ff4596"/></g><g clip-path="url(#sb694114)"><path d="M1 1h14v2.100H1z" fill="#ff4545"/><path d="M1 3h14v2.100H1z" fill="#ffe345"/><path d="M1 5h14v2.100H1z" fill="#80ff45"/><path d="M1 7h14v2.100H1z" fill="#45ffa2"/><path d="M1 9h14v2.100H1z" fill="#45d7ff"/><path d="M1 11h14v2.100H1z" fill="#8045ff"/><path d="M1 13h14v2.100H1z" fill="#ff4596"/></g></svg>
<div class="t" style="top:112.0px;height:20px;line-height:20px;font-size:14px;color:#d8d9dc;letter-spacing:.2px;left:718px;">StyleBoxFlat</div>
<svg style="left:1020px;top:118px;" width="14" height="9" viewBox="0 0 14 9"><path d="M2 2l5 5 5-5" stroke="#e0e0e0" stroke-width="2" fill="none"/></svg>
<svg style="left:1049px;top:112px;" width="16" height="20" viewBox="0 0 16 20"><circle cx="9.500" cy="5" r="3.300" stroke="#e0e0e0" stroke-width="2" fill="none"/><path d="M7.500 7.500L4 11" stroke="#e0e0e0" stroke-width="2"/><text x="0" y="19" font-size="7.500" font-weight="700" fill="#e0e0e0" letter-spacing="-0.3">DOC</text></svg>
<div style="left:690px;top:141px;width:349px;height:29px;background:#262b34;border-radius:3px;"></div>
<div class="t" style="top:145.0px;height:20px;line-height:20px;font-size:14px;color:#9b9ea5;left:697px;">プロパティを絞り込む</div>
<svg style="left:1016px;top:147px;" width="16" height="16" viewBox="0 0 16 16"><circle cx="6.500" cy="6.500" r="4" stroke="#e0e0e0" stroke-width="2" fill="none"/><path d="M9.500 9.500L14 14" stroke="#e0e0e0" stroke-width="2.300"/></svg>
<svg style="left:1049px;top:147px;" width="16" height="16" viewBox="0 0 16 16"><path d="M4.300 1v8" stroke="#e0e0e0" stroke-width="1.600" stroke-linecap="round"/><path d="M1.700 8.800h5.300v3.400a2.600 2.600 0 0 1-5.300 0z" fill="#e0e0e0"/><path d="M11 6.500v8.200" stroke="#e0e0e0" stroke-width="2"/><path d="M9 1v3a2 2 0 0 0 4 0V1" stroke="#e0e0e0" stroke-width="1.700" fill="none"/></svg>
<div style="left:690px;top:174px;width:381px;height:778px;background:#21262e;border-radius:3px 3px 0 0;"></div>
<div style="left:694px;top:178px;width:373px;height:150px;background:repeating-conic-gradient(#4e515a 0 25%,#9a9b9d 0 50%) 0 0/32px 32px;"></div>
<div style="left:710px;top:194px;width:341px;height:118px;background:rgba(17,181,116,.135);"></div>
<div style="left:694px;top:328px;width:373px;height:24px;background:#3e424d;"></div>
<svg style="left:826px;top:331px;" width="16" height="16" viewBox="0 0 16 16"><defs><clipPath id="sa826331"><path d="M3 1a2 2 0 0 0-2 2v10a2 2 0 0 0 2 2h4.586a4.500 4.500 0 0 1-.586-2.216 4.500 4.500 0 0 1 1.318-3.182L11.500 6.420l2.682 2.682a4.500 4.500 0 0 1 .318.357V3a2 2 0 0 0-2-2z"/></clipPath><clipPath id="sb826331"><path d="M11.500 8.200L9.530 10.170a2.790 2.790 0 0 0 0 3.940 2.790 2.790 0 0 0 3.940 0 2.790 2.790 0 0 0 0-3.940z"/></clipPath></defs><g clip-path="url(#sa826331)"><path d="M1 1h14v2.100H1z" fill="#ff4545"/><path d="M1 3h14v2.100H1z" fill="#ffe345"/><path d="M1 5h14v2.100H1z" fill="#80ff45"/><path d="M1 7h14v2.100H1z" fill="#45ffa2"/><path d="M1 9h14v2.100H1z" fill="#45d7ff"/><path d="M1 11h14v2.100H1z" fill="#8045ff"/><path d="M1 13h14v2.100H1z" fill="#ff4596"/></g><g clip-path="url(#sb826331)"><path d="M1 1h14v2.100H1z" fill="#ff4545"/><path d="M1 3h14v2.100H1z" fill="#ffe345"/><path d="M1 5h14v2.100H1z" fill="#80ff45"/><path d="M1 7h14v2.100H1z" fill="#45ffa2"/><path d="M1 9h14v2.100H1z" fill="#45d7ff"/><path d="M1 11h14v2.100H1z" fill="#8045ff"/><path d="M1 13h14v2.100H1z" fill="#ff4596"/></g></svg>
<div class="t" style="top:329.0px;height:20px;line-height:20px;font-size:14px;color:#e3e4e6;font-weight:700;letter-spacing:.2px;left:848px;">StyleBoxFlat</div>
<div class="t" style="top:355.0px;height:20px;line-height:20px;font-size:14px;color:#b7b9be;letter-spacing:.2px;left:702px;">BG Color</div>
<svg style="left:856px;top:357px;" width="16" height="16" viewBox="0 0 16 16"><path d="M4.500 5A5 5 0 1 1 3.200 9.500" stroke="#e0e0e0" stroke-width="1.800" fill="none"/><path d="M2 2v4.500h4.500z" fill="#e0e0e0"/></svg>
<div style="left:881px;top:352px;width:186px;height:28px;background:#1d2129;border:2px solid #70bafa;border-radius:3px;"></div>
<div style="left:887px;top:357px;width:174px;height:18px;background:repeating-conic-gradient(#e0f4eb 0 25%,#70887e 0 50%) 0 0/16px 16px;"></div>
<div class="t" style="top:387.0px;height:20px;line-height:20px;font-size:14px;color:#b7b9be;letter-spacing:.2px;left:702px;">Draw Center</div>
<div class="t" style="top:419.0px;height:20px;line-height:20px;font-size:14px;color:#b7b9be;letter-spacing:.2px;left:702px;">Skew</div>
<div class="t" style="top:485.0px;height:20px;line-height:20px;font-size:14px;color:#b7b9be;letter-spacing:.2px;left:702px;">Corner Detail</div>
<div style="left:694px;top:510px;width:373px;height:24px;background:#282c36;"></div>
<svg style="left:697px;top:518px;" width="10" height="10" viewBox="0 0 10 10"><path d="M3.300 1l4 4-4 4" stroke="#868a92" stroke-width="1.900" fill="none"/></svg>
<div class="t" style="top:512.0px;height:20px;line-height:20px;font-size:14px;color:#dcdde0;font-weight:700;left:710px;letter-spacing:.35px;">Border Width</div>
<div style="left:694px;top:534px;width:373px;height:24px;background:#282c36;"></div>
<svg style="left:697px;top:542px;" width="10" height="10" viewBox="0 0 10 10"><path d="M3.300 1l4 4-4 4" stroke="#868a92" stroke-width="1.900" fill="none"/></svg>
<div class="t" style="top:536.0px;height:20px;line-height:20px;font-size:14px;color:#dcdde0;font-weight:700;left:710px;letter-spacing:.35px;">Border</div>
<div style="left:694px;top:558px;width:373px;height:24px;background:#282c36;"></div>
<svg style="left:697px;top:566px;" width="10" height="10" viewBox="0 0 10 10"><path d="M3.300 1l4 4-4 4" stroke="#868a92" stroke-width="1.900" fill="none"/></svg>
<div class="t" style="top:560.0px;height:20px;line-height:20px;font-size:14px;color:#dcdde0;font-weight:700;left:710px;letter-spacing:.35px;">Corner Radius</div>
<div style="left:694px;top:582px;width:373px;height:24px;background:#282c36;"></div>
<svg style="left:697px;top:590px;" width="10" height="10" viewBox="0 0 10 10"><path d="M3.300 1l4 4-4 4" stroke="#868a92" stroke-width="1.900" fill="none"/></svg>
<div class="t" style="top:584.0px;height:20px;line-height:20px;font-size:14px;color:#dcdde0;font-weight:700;left:710px;letter-spacing:.35px;">Expand Margins</div>
<div style="left:694px;top:606px;width:373px;height:24px;background:#282c36;"></div>
<svg style="left:697px;top:614px;" width="10" height="10" viewBox="0 0 10 10"><path d="M3.300 1l4 4-4 4" stroke="#868a92" stroke-width="1.900" fill="none"/></svg>
<div class="t" style="top:608.0px;height:20px;line-height:20px;font-size:14px;color:#dcdde0;font-weight:700;left:710px;letter-spacing:.35px;">Shadow</div>
<div style="left:694px;top:630px;width:373px;height:24px;background:#282c36;"></div>
<svg style="left:697px;top:638px;" width="10" height="10" viewBox="0 0 10 10"><path d="M3.300 1l4 4-4 4" stroke="#868a92" stroke-width="1.900" fill="none"/></svg>
<div class="t" style="top:632.0px;height:20px;line-height:20px;font-size:14px;color:#dcdde0;font-weight:700;left:710px;letter-spacing:.35px;">Anti Aliasing</div>
<div style="left:694px;top:655px;width:373px;height:24px;background:#3e424d;border-radius:2px;"></div>
<div style="left:694px;top:678px;width:373px;height:24px;background:#282c36;"></div>
<svg style="left:697px;top:686px;" width="10" height="10" viewBox="0 0 10 10"><path d="M3.300 1l4 4-4 4" stroke="#868a92" stroke-width="1.900" fill="none"/></svg>
<div class="t" style="top:680.0px;height:20px;line-height:20px;font-size:14px;color:#dcdde0;font-weight:700;left:710px;letter-spacing:.35px;">Content Margins</div>
<div style="left:694px;top:703px;width:373px;height:24px;background:#3e424d;border-radius:2px;"></div>
<div style="left:694px;top:726px;width:373px;height:24px;background:#282c36;"></div>
<svg style="left:697px;top:734px;" width="10" height="10" viewBox="0 0 10 10"><path d="M3.300 1l4 4-4 4" stroke="#868a92" stroke-width="1.900" fill="none"/></svg>
<div class="t" style="top:728.0px;height:20px;line-height:20px;font-size:14px;color:#dcdde0;font-weight:700;left:710px;letter-spacing:.35px;">Resource</div>
<div style="left:694px;top:751px;width:373px;height:24px;background:#3e424d;border-radius:2px;"></div>
<div class="t" style="top:779.0px;height:20px;line-height:20px;font-size:14px;color:#b7b9be;letter-spacing:.2px;left:702px;">Script</div>
<div style="left:767px;top:380px;width:315px;height:572px;background:#363d4a;box-shadow:0 0 6px rgba(0,0,0,.35);"></div>
<div style="left:780px;top:393px;width:256px;height:248px;"><div style="left:0.00px;top:0.00px;width:256.00px;height:248.00px;border-radius:50%;background:conic-gradient(from 90deg,#ff4793,#ff4f76,#ff5556,#ff5a2a,#f06c00,#df7d00,#d08800,#c29000,#b39700,#a39f00,#8da600,#6aaf00,#00b926,#00b66c,#00b489,#00b19c,#00afac,#00adba,#00abc9,#00a8d9,#00a3ef,#399cff,#6394ff,#7f8cff,#9682ff,#ae75ff,#c860ff,#ec25ff,#ff00dd,#ff37b4,#ff4793)"></div><div style="left:2.00px;top:1.94px;width:252.00px;height:244.12px;border-radius:50%;background:conic-gradient(from 90deg,#fe4993,#fe5176,#fd5758,#fd5c2f,#ef6d0c,#de7d06,#cf8805,#c19004,#b39805,#a29f05,#8da606,#6baf0e,#21b832,#11b66d,#0bb389,#08b19c,#06afab,#06adba,#06abc8,#08a8d9,#0ea3ed,#3b9cfd,#6494fe,#7f8cfe,#9683fe,#ad76fe,#c862fe,#e933fb,#fb1fdb,#fd3bb4,#fe4993)"></div><div style="left:4.00px;top:3.88px;width:248.00px;height:240.25px;border-radius:50%;background:conic-gradient(from 90deg,#fd4b93,#fd5377,#fc5959,#fb5f33,#ee6f14,#dd7d0c,#cf880a,#c19009,#b39809,#a29f0a,#8da60c,#6caf17,#2fb73a,#1cb56e,#14b389,#10b19c,#0dafab,#0cadba,#0cabc8,#0fa8d8,#17a3ec,#3e9cfc,#6594fd,#7f8cfd,#9683fe,#ad76fe,#c763fc,#e63df7,#f82dd8,#fc3fb3,#fd4b93)"></div><div style="left:6.00px;top:5.81px;width:244.00px;height:236.38px;border-radius:50%;background:conic-gradient(from 90deg,#fb4d94,#fb5477,#fa5b5b,#f96137,#ed701b,#dd7e12,#cf880e,#c1900e,#b3980e,#a29f0e,#8da611,#6dae1e,#38b640,#23b56f,#1ab389,#15b19c,#12afab,#11adb9,#11abc8,#15a8d8,#1ea3eb,#419cfa,#6595fb,#7f8dfd,#9683fd,#ad77fd,#c664fa,#e444f4,#f636d6,#fa43b2,#fb4d94)"></div><div style="left:8.00px;top:7.75px;width:240.00px;height:232.50px;border-radius:50%;background:conic-gradient(from 90deg,#fa4f94,#fa5678,#f95d5c,#f7633b,#ec7120,#dc7e16,#ce8812,#c09012,#b29812,#a29f13,#8da616,#6eae23,#3fb545,#29b470,#1fb289,#1ab19c,#17afab,#15adb9,#16abc7,#1aa7d7,#23a3ea,#439cf8,#6695fa,#7f8dfc,#9683fd,#ad77fc,#c666f9,#e14af0,#f33ed4,#f847b2,#fa4f94)"></div><div style="left:10.00px;top:9.69px;width:236.00px;height:228.62px;border-radius:50%;background:conic-gradient(from 90deg,#f95194,#f95878,#f75f5e,#f5653e,#ea7224,#dc7e1a,#ce8816,#c09115,#b29816,#a29f16,#8da619,#6fae28,#45b449,#2eb470,#24b28a,#1eb09c,#1bafab,#19adb9,#1aaac7,#1ea7d6,#28a3e8,#459cf7,#6795f9,#808dfb,#9684fc,#ad78fb,#c567f7,#df4fed,#f044d2,#f64ab1,#f95194)"></div><div style="left:12.00px;top:11.62px;width:232.00px;height:224.75px;border-radius:50%;background:conic-gradient(from 90deg,#f85394,#f85979,#f5615f,#f36741,#e97328,#db7f1e,#cd8919,#c09119,#b29819,#a29f1a,#8ea61d,#70ae2c,#49b34d,#32b371,#28b28a,#22b09c,#1eafab,#1cadb9,#1daac7,#22a7d6,#2ca3e7,#479cf5,#6895f7,#808dfa,#9684fb,#ac78fa,#c469f6,#dd54eb,#ee49d1,#f54db1,#f85394)"></div><div style="left:14.00px;top:13.56px;width:228.00px;height:220.88px;border-radius:50%;background:conic-gradient(from 90deg,#f65594,#f65b79,#f46360,#f16944,#e8742c,#da7f21,#cd891d,#c0911c,#b2981c,#a29f1d,#8ea621,#71ad30,#4db350,#36b372,#2cb28a,#26b09c,#22aeab,#20acb8,#21aac6,#25a7d5,#30a3e6,#499cf3,#6895f6,#808df9,#9684fa,#ac79f9,#c36af4,#db58e8,#ec4dcf,#f350b0,#f65594)"></div><div style="left:16.00px;top:15.50px;width:224.00px;height:217.00px;border-radius:50%;background:conic-gradient(from 90deg,#f55794,#f55d7a,#f26461,#f06a46,#e77430,#da8024,#cc8920,#bf911f,#b1981f,#a29f20,#8ea624,#72ad34,#50b252,#3ab373,#2fb18a,#29b09c,#25aeaa,#23acb8,#24aac6,#29a7d4,#33a3e5,#4b9cf2,#6995f5,#808ef8,#9684f9,#ac79f8,#c36bf2,#d95be6,#ea51cd,#f152b0,#f55794)"></div><div style="left:18.00px;top:17.44px;width:220.00px;height:213.12px;border-radius:50%;background:conic-gradient(from 90deg,#f35994,#f45e7b,#f16663,#ee6c49,#e57533,#d98028,#cc8923,#bf9122,#b19823,#a29f23,#8ea627,#73ad37,#53b155,#3db274,#32b18a,#2cb09c,#28aeaa,#26acb8,#27aac5,#2ca7d4,#37a3e4,#4d9cf0,#6a96f3,#808ef6,#9685f8,#ac7af7,#c26df1,#d85ee4,#e855cc,#f055af,#f35994)"></div><div style="left:20.00px;top:19.38px;width:216.00px;height:209.25px;border-radius:50%;background:conic-gradient(from 90deg,#f25b94,#f2607b,#ef6764,#ec6d4b,#e47636,#d8812b,#cb8a26,#be9125,#b19826,#a29f26,#8ea52a,#73ac3a,#55b157,#40b274,#35b18b,#2faf9c,#2baeaa,#29acb7,#2aaac5,#2fa7d3,#3aa3e2,#4f9cef,#6b96f2,#818ef5,#9685f7,#ab7af5,#c16eef,#d660e1,#e658cb,#ee58af,#f25b94)"></div><div style="left:22.00px;top:21.31px;width:212.00px;height:205.38px;border-radius:50%;background:conic-gradient(from 90deg,#f05d94,#f1627c,#ee6965,#eb6e4d,#e37739,#d7812e,#cb8a29,#be9128,#b19829,#a19e2a,#8ea52e,#74ac3d,#57b059,#43b175,#38b08b,#32af9c,#2eaeaa,#2cacb7,#2daac4,#32a7d2,#3ca2e1,#519ded,#6b96f1,#818ff4,#9686f6,#ab7bf4,#c06fed,#d463e0,#e45bc9,#ec5aae,#f05d94)"></div><div style="left:24.00px;top:23.25px;width:208.00px;height:201.50px;border-radius:50%;background:conic-gradient(from 90deg,#ef5f94,#ef647c,#ec6a66,#e9704f,#e2783c,#d68231,#ca8a2c,#bd912c,#b0982c,#a19e2d,#8ea531,#75ac40,#59b05a,#45b176,#3bb08b,#35af9c,#31adaa,#2facb7,#30a9c4,#35a6d1,#3fa2e0,#539dec,#6c96ef,#818ff2,#9686f4,#ab7cf2,#bf71eb,#d365de,#e25dc8,#eb5cae,#ef5f94)"></div><div style="left:26.00px;top:25.19px;width:204.00px;height:197.62px;border-radius:50%;background:conic-gradient(from 90deg,#ed6194,#ed657d,#eb6b67,#e87151,#e1793e,#d58234,#c98b30,#bd922f,#b0982f,#a19e30,#8ea534,#76ab42,#5bb05c,#48b176,#3eb08b,#38af9c,#34ada9,#33abb6,#34a9c3,#38a6d1,#41a2df,#549deb,#6d96ee,#828ff1,#9687f2,#aa7df1,#be72e9,#d267dc,#e15fc7,#e95ead,#ed6194)"></div><div style="left:28.00px;top:27.12px;width:200.00px;height:193.75px;border-radius:50%;background:conic-gradient(from 90deg,#eb6395,#ec677e,#e96d69,#e77253,#df7a41,#d48337,#c88b33,#bc9232,#af9832,#a19e33,#8fa537,#77ab45,#5caf5d,#4ab077,#40b08b,#3bae9b,#37ada9,#35abb6,#36a9c3,#3ba6d0,#44a2de,#569de9,#6e96ec,#828fef,#9687f1,#aa7eef,#be73e8,#d069da,#df62c6,#e761ad,#eb6395)"></div><div style="left:30.00px;top:29.06px;width:196.00px;height:189.88px;border-radius:50%;background:conic-gradient(from 90deg,#ea6495,#ea687e,#e86e6a,#e57355,#de7b43,#d3833a,#c88b36,#bc9235,#af9835,#a19e36,#8fa53a,#77ab47,#5eaf5f,#4cb078,#43af8c,#3dae9b,#3aada9,#38abb6,#39a9c2,#3da6cf,#46a2dd,#589de8,#6f97eb,#8390ed,#9688ef,#a97fed,#bd75e6,#cf6ad9,#dd64c5,#e663ac,#ea6495)"></div><div style="left:32.00px;top:31.00px;width:192.00px;height:186.00px;border-radius:50%;background:conic-gradient(from 90deg,#e86695,#e96a7f,#e66f6b,#e47456,#dd7c46,#d2843c,#c78c38,#bb9238,#af9838,#a19e39,#8fa43d,#78ab49,#60af60,#4eb078,#45af8c,#40ae9b,#3caca9,#3babb5,#3ca9c1,#40a6ce,#48a2db,#599de6,#7097e9,#8390ec,#9688ed,#a97feb,#bc76e4,#ce6cd7,#dc66c3,#e465ac,#e86695)"></div><div style="left:34.00px;top:32.94px;width:188.00px;height:182.12px;border-radius:50%;background:conic-gradient(from 90deg,#e66895,#e76b80,#e5716c,#e27558,#dc7c48,#d1843f,#c68c3b,#bb923a,#ae983b,#a09e3c,#8fa440,#79aa4c,#61ae61,#50af79,#48af8c,#42ad9b,#3faca9,#3eabb5,#3fa8c1,#42a6cd,#4ba2da,#5b9de5,#7097e8,#8390ea,#9689eb,#a880e9,#bb77e2,#cd6ed6,#da68c2,#e267ab,#e66895)"></div><div style="left:36.00px;top:34.88px;width:184.00px;height:178.25px;border-radius:50%;background:conic-gradient(from 90deg,#e56a95,#e66d80,#e3726d,#e1765a,#da7d4a,#d08542,#c58c3e,#ba933d,#ae983d,#a09e3e,#8fa442,#7aaa4e,#63ae63,#52af7a,#4aae8c,#45ad9b,#41aca8,#40aab4,#41a8c0,#45a6cc,#4da2d9,#5c9de3,#7197e6,#8491e9,#9689ea,#a881e7,#ba78e0,#cb6fd4,#d969c1,#e168ab,#e56a95)"></div><div style="left:38.00px;top:36.81px;width:180.00px;height:174.38px;border-radius:50%;background:conic-gradient(from 90deg,#e36b95,#e46e81,#e2736e,#e0775b,#d97e4c,#cf8644,#c58d40,#b9933f,#ad9940,#a09e41,#8fa445,#7aaa50,#64ad64,#54ae7a,#4cae8d,#47ad9b,#44aca8,#43aab4,#44a8c0,#47a5cc,#4fa2d8,#5e9de2,#7297e5,#8491e7,#968ae8,#a882e5,#b979df,#ca71d2,#d76bc0,#df6aab,#e36b95)"></div><div style="left:40.00px;top:38.75px;width:176.00px;height:170.50px;border-radius:50%;background:conic-gradient(from 90deg,#e16d95,#e27081,#e1746f,#de785d,#d87f4f,#ce8646,#c48d43,#b99342,#ad9942,#a09e44,#90a447,#7ba952,#66ad65,#56ae7b,#4eae8d,#49ad9b,#46aba8,#45aab3,#46a8bf,#49a5cb,#51a2d7,#5f9de0,#7397e3,#8491e5,#968ae6,#a783e4,#b87add,#c972d1,#d66dbf,#dd6caa,#e16d95)"></div><div style="left:42.00px;top:40.69px;width:172.00px;height:166.62px;border-radius:50%;background:conic-gradient(from 90deg,#e06e95,#e17182,#df7570,#dd795f,#d77f51,#cd8749,#c38d45,#b89344,#ad9945,#a09e46,#90a44a,#7ca954,#67ad67,#58ae7c,#50ad8d,#4bac9b,#48aba8,#47aab3,#48a8be,#4ca5ca,#53a2d6,#619ddf,#7497e2,#8592e4,#968be4,#a783e2,#b87bdb,#c874cf,#d46fbe,#dc6daa,#e06e95)"></div><div style="left:44.00px;top:42.62px;width:168.00px;height:162.75px;border-radius:50%;background:conic-gradient(from 90deg,#de7095,#df7283,#de7771,#db7a60,#d58053,#cc874b,#c28e48,#b89347,#ac9947,#a09e48,#90a34c,#7ca956,#68ac68,#5aad7c,#52ad8d,#4eac9b,#4baba7,#4aa9b3,#4ba7be,#4ea5c9,#55a1d4,#629ddd,#7598e0,#8592e2,#968be3,#a684e0,#b77dd9,#c675ce,#d370bd,#da6fa9,#de7095)"></div><div style="left:46.00px;top:44.56px;width:164.00px;height:158.88px;border-radius:50%;background:conic-gradient(from 90deg,#dc7195,#de7483,#dc7872,#da7b62,#d48155,#cb884d,#c18e4a,#b79349,#ac9949,#9f9e4b,#90a34e,#7da858,#6aac69,#5cad7d,#54ac8d,#50ac9b,#4daaa7,#4ca9b2,#4da7bd,#50a5c8,#57a1d3,#649ddc,#7698df,#8692e0,#968ce1,#a685de,#b67ed7,#c577cc,#d172bc,#d871a9,#dc7195)"></div><div style="left:48.00px;top:46.50px;width:160.00px;height:155.00px;border-radius:50%;background:conic-gradient(from 90deg,#db7396,#dc7584,#db7973,#d87c63,#d38257,#ca8850,#c08e4c,#b6944b,#ab994b,#9f9e4d,#90a351,#7ea85a,#6bab6b,#5eac7e,#56ac8e,#52ab9b,#4faaa7,#4ea9b2,#4fa7bc,#52a5c7,#59a1d2,#659ddb,#7698dd,#8692df,#968cdf,#a685dc,#b57fd6,#c478cb,#d073bb,#d772a8,#db7396)"></div><div style="left:50.00px;top:48.44px;width:156.00px;height:151.12px;border-radius:50%;background:conic-gradient(from 90deg,#d97496,#da7684,#d97a75,#d77d65,#d18259,#c98952,#c08e4e,#b6944d,#ab994e,#9f9e4f,#90a353,#7fa85c,#6dab6c,#60ac7e,#58ac8e,#54ab9b,#51aaa7,#50a9b1,#51a7bc,#54a4c6,#5ba1d1,#679dd9,#7798db,#8693dd,#968ddd,#a586db,#b480d4,#c379c9,#ce75ba,#d574a8,#d97496)"></div><div style="left:52.00px;top:50.38px;width:152.00px;height:147.25px;border-radius:50%;background:conic-gradient(from 90deg,#d77696,#d97885,#d87b76,#d67e67,#d0835b,#c88954,#bf8f51,#b5944f,#ab9950,#9f9e51,#91a355,#7fa75e,#6eab6d,#62ac7f,#5aab8e,#56ab9b,#53aaa6,#52a8b1,#53a6bb,#56a4c5,#5da1d0,#689dd8,#7898da,#8793db,#968ddc,#a587d9,#b480d2,#c27ac8,#cd76b9,#d475a7,#d77696)"></div><div style="left:54.00px;top:52.31px;width:148.00px;height:143.38px;border-radius:50%;background:conic-gradient(from 90deg,#d67796,#d77986,#d67c77,#d47f68,#cf845d,#c78a56,#be8f53,#b49452,#aa9952,#9f9e53,#91a257,#80a760,#6faa6e,#63ab7f,#5cab8e,#58aa9b,#55a9a6,#54a8b0,#55a6ba,#58a4c4,#5ea1ce,#699dd6,#7998d8,#8793da,#968eda,#a488d7,#b381d1,#c07cc6,#cb78b8,#d276a7,#d67796)"></div><div style="left:56.00px;top:54.25px;width:144.00px;height:139.50px;border-radius:50%;background:conic-gradient(from 90deg,#d47896,#d67a86,#d47d78,#d3806a,#ce855f,#c68a58,#bd8f55,#b49454,#aa9954,#9f9e56,#91a259,#81a761,#71aa70,#65ab80,#5eab8f,#5aaa9b,#57a9a6,#56a8b0,#57a6ba,#5aa4c3,#60a1cd,#6b9dd5,#7a98d7,#8893d8,#968ed8,#a488d5,#b282cf,#bf7dc5,#ca79b7,#d078a6,#d47896)"></div><div style="left:58.00px;top:56.19px;width:140.00px;height:135.62px;border-radius:50%;background:conic-gradient(from 90deg,#d37996,#d47b87,#d37e79,#d1816b,#cc8560,#c58b5a,#bc9057,#b39456,#a99956,#9e9e58,#91a25b,#82a663,#72a971,#67aa81,#60aa8f,#5caa9b,#59a9a5,#58a7af,#59a6b9,#5ca4c2,#62a1cc,#6c9dd3,#7b98d5,#8894d7,#968ed6,#a489d4,#b183cd,#be7ec4,#c87ab6,#cf79a6,#d37996)"></div><div style="left:60.00px;top:58.12px;width:136.00px;height:131.75px;border-radius:50%;background:conic-gradient(from 90deg,#d17b96,#d27c87,#d17f7a,#d0826d,#cb8662,#c48b5c,#bb9059,#b39558,#a99958,#9e9d5a,#91a25d,#82a665,#73a972,#68aa81,#62aa8f,#5ea99b,#5ba8a5,#5aa7af,#5ba5b8,#5ea3c1,#64a0ca,#6e9dd1,#7b98d4,#8994d5,#968fd5,#a389d2,#b184cc,#bd7fc2,#c77cb5,#cd7aa6,#d17b96)"></div><div style="left:62.00px;top:60.06px;width:132.00px;height:127.88px;border-radius:50%;background:conic-gradient(from 90deg,#cf7c96,#d17d88,#d0807b,#ce836e,#ca8764,#c38c5e,#bb905b,#b2955a,#a9995a,#9e9d5c,#92a25f,#83a667,#74a973,#6aaa82,#64aa8f,#60a99b,#5da8a5,#5ca7ae,#5da5b7,#60a3c0,#65a0c9,#6f9dd0,#7c99d2,#8994d3,#968fd3,#a38ad0,#b085ca,#bc80c1,#c57db4,#cc7ca5,#cf7c96)"></div><div style="left:64.00px;top:62.00px;width:128.00px;height:124.00px;border-radius:50%;background:conic-gradient(from 90deg,#ce7d96,#cf7e88,#ce817c,#cd836f,#c88766,#c28c60,#ba915d,#b1955c,#a8995c,#9e9d5e,#92a161,#84a568,#76a875,#6ca983,#65a990,#61a99b,#5fa8a5,#5ea7ae,#5fa5b7,#62a3bf,#67a0c8,#709dce,#7d99d0,#8994d2,#9690d1,#a38bce,#af86c8,#bb81bf,#c47eb3,#ca7da5,#ce7d96)"></div><div style="left:66.00px;top:63.94px;width:124.00px;height:120.12px;border-radius:50%;background:conic-gradient(from 90deg,#cc7e96,#cd7f89,#cd827d,#cb8471,#c78868,#c08c62,#b9915f,#b1955e,#a8995e,#9e9d60,#92a163,#84a56a,#77a876,#6da983,#67a990,#63a89b,#61a7a4,#60a6ad,#61a5b6,#64a3be,#69a0c7,#729dcd,#7e99cf,#8a95d0,#9690cf,#a28bcd,#ae86c7,#b982be,#c27fb2,#c87ea4,#cc7e96)"></div><div style="left:68.00px;top:65.88px;width:120.00px;height:116.25px;border-radius:50%;background:conic-gradient(from 90deg,#ca7f96,#cc808a,#cb837e,#ca8572,#c68969,#bf8d64,#b89161,#b09560,#a79960,#9e9d62,#92a165,#85a56c,#78a777,#6fa884,#69a890,#65a89b,#63a7a4,#62a6ad,#63a4b5,#66a2bd,#6ba0c5,#739dcb,#7f99cd,#8a95ce,#9690ce,#a28ccb,#ad87c5,#b883bd,#c180b1,#c77fa4,#ca7f96)"></div><div style="left:70.00px;top:67.81px;width:116.00px;height:112.38px;border-radius:50%;background:conic-gradient(from 90deg,#c98097,#ca818a,#ca847f,#c88674,#c4896b,#be8d66,#b79263,#af9562,#a79962,#9d9d64,#92a167,#86a46e,#79a778,#70a885,#6ba890,#67a79b,#65a7a4,#64a6ac,#65a4b4,#67a2bc,#6ca0c4,#749dca,#8099cc,#8b95cc,#9691cc,#a18cc9,#ad88c4,#b784bb,#c081b0,#c580a4,#c98097)"></div><div style="left:72.00px;top:69.75px;width:112.00px;height:108.50px;border-radius:50%;background:conic-gradient(from 90deg,#c78197,#c9828b,#c88480,#c78775,#c38a6d,#bd8e68,#b69265,#af9664,#a69964,#9d9d66,#93a169,#86a46f,#7ba679,#72a786,#6ca791,#69a79b,#67a6a3,#66a5ac,#67a4b4,#69a2bb,#6ea0c3,#769cc8,#8199ca,#8b95cb,#9691ca,#a18dc7,#ac89c2,#b685ba,#be82af,#c481a3,#c78197)"></div><div style="left:74.00px;top:71.69px;width:108.00px;height:104.62px;border-radius:50%;background:conic-gradient(from 90deg,#c68297,#c7838b,#c78581,#c58777,#c28b6f,#bc8e6a,#b59267,#ae9666,#a69966,#9d9d68,#93a06b,#87a471,#7ca67b,#73a786,#6ea791,#6aa79a,#68a6a3,#68a5ab,#69a4b3,#6ba2ba,#709fc1,#779cc7,#8199c8,#8c95c9,#9691c8,#a18dc6,#ab8ac0,#b586b9,#bd83ae,#c282a3,#c68297)"></div><div style="left:76.00px;top:73.62px;width:104.00px;height:100.75px;border-radius:50%;background:conic-gradient(from 90deg,#c48497,#c5848c,#c58682,#c48878,#c08b70,#bb8f6b,#b49269,#ad9668,#a59968,#9d9d69,#93a06d,#88a372,#7da67c,#75a787,#70a791,#6ca69a,#6aa6a3,#6aa5ab,#6aa3b2,#6da2b9,#719fc0,#789cc5,#8299c7,#8c96c7,#9692c7,#a08ec4,#ab8abf,#b487b7,#bb85ae,#c184a2,#c48497)"></div><div style="left:78.00px;top:75.56px;width:100.00px;height:96.88px;border-radius:50%;background:conic-gradient(from 90deg,#c28597,#c4858c,#c38782,#c28979,#bf8c72,#ba8f6d,#b3936b,#ac966a,#a5996a,#9d9d6b,#93a06e,#88a374,#7ea57d,#76a688,#71a691,#6ea69a,#6ca5a2,#6ba4aa,#6ca3b1,#6fa1b8,#739fbf,#7a9cc3,#8399c5,#8d96c6,#9692c5,#a08ec2,#aa8bbd,#b388b6,#ba86ad,#bf85a2,#c28597)"></div><div style="left:80.00px;top:77.50px;width:96.00px;height:93.00px;border-radius:50%;background:conic-gradient(from 90deg,#c18697,#c2868d,#c28883,#c18a7b,#bd8c74,#b8906f,#b2936d,#ac966c,#a5996c,#9d9d6d,#93a070,#89a376,#7fa57e,#78a688,#73a692,#70a59a,#6ea5a2,#6da4aa,#6ea3b0,#70a1b7,#749fbd,#7b9cc2,#8499c3,#8d96c4,#9692c3,#a08fc1,#a98cbc,#b289b5,#b986ac,#be86a2,#c18697)"></div><div style="left:82.00px;top:79.44px;width:92.00px;height:89.12px;border-radius:50%;background:conic-gradient(from 90deg,#bf8697,#c0878d,#c08984,#bf8a7c,#bc8d75,#b79071,#b1936e,#ab966d,#a4996e,#9c9c6f,#949f72,#8aa277,#81a47f,#79a589,#75a592,#72a59a,#70a4a2,#6fa4a9,#70a2b0,#72a1b6,#769fbc,#7c9cc0,#8599c2,#8e96c2,#9693c1,#9f8fbf,#a88cba,#b189b4,#b787ab,#bc87a1,#bf8697)"></div><div style="left:84.00px;top:81.38px;width:88.00px;height:85.25px;border-radius:50%;background:conic-gradient(from 90deg,#bd8797,#bf888e,#bf8985,#be8b7d,#bb8e77,#b69173,#b09470,#aa966f,#a49970,#9c9c71,#949f74,#8ba279,#82a480,#7ba58a,#76a592,#73a59a,#71a4a2,#71a3a8,#72a2af,#74a1b5,#789fbb,#7e9cbf,#8699c0,#8e96c1,#9793c0,#9f90bd,#a88db9,#af8ab2,#b688aa,#bb88a1,#bd8797)"></div><div style="left:86.00px;top:83.31px;width:84.00px;height:81.38px;border-radius:50%;background:conic-gradient(from 90deg,#bc8897,#bd898e,#bd8a86,#bc8c7f,#b98e79,#b59175,#b09472,#aa9771,#a39972,#9c9c73,#949f76,#8ba17a,#83a382,#7ca48a,#78a493,#75a49a,#73a4a1,#73a3a8,#73a2ae,#76a0b4,#799eb9,#7f9cbd,#8799be,#8e96bf,#9793be,#9f90bb,#a78eb7,#ae8bb1,#b589a9,#b988a0,#bc8897)"></div><div style="left:88.00px;top:85.25px;width:80.00px;height:77.50px;border-radius:50%;background:conic-gradient(from 90deg,#ba8997,#bc8a8f,#bb8b87,#ba8d80,#b88f7a,#b49176,#af9474,#a99773,#a39973,#9c9c75,#949f77,#8ca17c,#84a383,#7ea48b,#7aa493,#77a49a,#75a3a1,#75a2a7,#75a1ad,#77a0b3,#7b9eb8,#809cbb,#8799bd,#8f97bd,#9794bc,#9f91ba,#a68eb6,#ad8cb0,#b38aa8,#b789a0,#ba8997)"></div><div style="left:90.00px;top:87.19px;width:76.00px;height:73.62px;border-radius:50%;background:conic-gradient(from 90deg,#b98a97,#ba8b8f,#ba8c88,#b98d81,#b68f7c,#b29278,#ae9476,#a89775,#a29975,#9c9c77,#949e79,#8da17d,#85a284,#7fa38c,#7ba393,#78a39a,#77a3a1,#76a2a7,#77a1ac,#79a0b2,#7c9eb6,#819cba,#8899bb,#8f97bb,#9794ba,#9e91b8,#a68fb4,#ac8daf,#b28ba8,#b68aa0,#b98a97)"></div><div style="left:92.00px;top:89.12px;width:72.00px;height:69.75px;border-radius:50%;background:conic-gradient(from 90deg,#b78b98,#b88c90,#b88d89,#b78e83,#b5907d,#b1927a,#ad9578,#a79777,#a29977,#9c9c78,#959e7b,#8da07f,#86a285,#81a38c,#7da393,#7aa39a,#79a2a0,#78a2a6,#79a1ab,#7b9fb0,#7e9eb5,#839cb8,#8999b9,#9097ba,#9794b9,#9e92b6,#a590b3,#ab8dad,#b18ca7,#b48b9f,#b78b98)"></div><div style="left:94.00px;top:91.06px;width:68.00px;height:65.88px;border-radius:50%;background:conic-gradient(from 90deg,#b58c98,#b78c91,#b78d8a,#b68f84,#b3907f,#b0937c,#ac957a,#a79779,#a19979,#9b9c7a,#959e7d,#8ea080,#87a186,#82a28d,#7ea294,#7ca29a,#7aa2a0,#7aa1a5,#7ba0aa,#7c9faf,#7f9db3,#849cb7,#8a99b8,#9097b8,#9795b7,#9e92b5,#a490b1,#aa8eac,#af8da6,#b38c9f,#b58c98)"></div><div style="left:96.00px;top:93.00px;width:64.00px;height:62.00px;border-radius:50%;background:conic-gradient(from 90deg,#b48d98,#b58d91,#b58e8b,#b48f85,#b29181,#af937d,#ab957b,#a6977b,#a1997b,#9b9c7c,#959e7e,#8fa082,#88a187,#83a28e,#80a294,#7ea29a,#7ca29f,#7ca1a5,#7ca0aa,#7e9fae,#819db2,#859bb5,#8b99b6,#9197b6,#9795b5,#9d93b3,#a391b0,#a98fab,#ae8ea5,#b18d9e,#b48d98)"></div><div style="left:98.00px;top:94.94px;width:60.00px;height:58.12px;border-radius:50%;background:conic-gradient(from 90deg,#b28e98,#b38e92,#b38f8c,#b29086,#b09282,#ad937f,#aa957d,#a5977d,#a0997d,#9b9b7e,#959d80,#8f9f83,#89a088,#85a18e,#82a194,#7fa19a,#7ea19f,#7ea0a4,#7ea0a9,#809ead,#829db1,#869bb3,#8c99b4,#9197b4,#9795b3,#9d93b1,#a391ae,#a890aa,#ad8ea4,#b08e9e,#b28e98)"></div><div style="left:100.00px;top:96.88px;width:56.00px;height:54.25px;border-radius:50%;background:conic-gradient(from 90deg,#b08f98,#b18f92,#b2908d,#b19188,#af9284,#ac9481,#a8967f,#a4987e,#a0997f,#9b9b80,#969d82,#909f85,#8ba08a,#86a18f,#83a195,#81a19a,#80a19f,#7fa0a3,#809fa8,#819eac,#849daf,#889bb2,#8d99b2,#9297b3,#9796b2,#9d94b0,#a292ad,#a790a9,#ab8fa3,#ae8f9e,#b08f98)"></div><div style="left:102.00px;top:98.81px;width:52.00px;height:50.38px;border-radius:50%;background:conic-gradient(from 90deg,#af8f98,#b09093,#b0908e,#af9189,#ad9385,#ab9483,#a79681,#a49880,#9f9980,#9b9b81,#969d83,#919e86,#8ca08b,#88a090,#85a095,#83a09a,#82a09e,#81a0a3,#829fa7,#839eaa,#859dae,#899bb0,#8e99b1,#9298b1,#9796b0,#9c94ae,#a192ab,#a691a7,#aa90a3,#ad8f9d,#af8f98)"></div><div style="left:104.00px;top:100.75px;width:48.00px;height:46.50px;border-radius:50%;background:conic-gradient(from 90deg,#ad9098,#ae9093,#ae918e,#ae928a,#ac9387,#a99584,#a69683,#a39882,#9f9982,#9b9b83,#969d85,#919e88,#8d9f8c,#89a090,#86a095,#84a09a,#83a09e,#839fa2,#839ea6,#859ea9,#879cac,#8a9bae,#8e99af,#9398af,#9796ae,#9c94ac,#a193aa,#a592a6,#a991a2,#ab909d,#ad9098)"></div><div style="left:106.00px;top:102.69px;width:44.00px;height:42.62px;border-radius:50%;background:conic-gradient(from 90deg,#ab9198,#ac9194,#ac928f,#ac938b,#aa9488,#a89586,#a59685,#a29884,#9e9984,#9a9b85,#969c87,#929e89,#8e9f8d,#8a9f91,#889f95,#869f9a,#859f9e,#859fa1,#859ea5,#869da8,#899cab,#8b9bac,#8f99ad,#9398ad,#9896ac,#9c95ab,#a094a8,#a492a5,#a792a1,#aa919d,#ab9198)"></div><div style="left:108.00px;top:104.62px;width:40.00px;height:38.75px;border-radius:50%;background:conic-gradient(from 90deg,#aa9298,#ab9294,#ab9290,#aa938d,#a9948a,#a79588,#a49786,#a19886,#9e9986,#9a9b87,#969c88,#929d8b,#8f9e8e,#8c9f92,#899f96,#889f9a,#879f9d,#879ea1,#879ea4,#889da7,#8a9ca9,#8d9bab,#9099ab,#9498ab,#9897ab,#9c95a9,#9f94a7,#a393a4,#a692a0,#a8929c,#aa9298)"></div><div style="left:110.00px;top:106.56px;width:36.00px;height:34.88px;border-radius:50%;background:conic-gradient(from 90deg,#a89298,#a99395,#a99391,#a9948e,#a7958b,#a6968a,#a39788,#a09888,#9d9988,#9a9b89,#979c8a,#939d8c,#909e8f,#8d9e93,#8b9e96,#899e99,#899e9d,#889ea0,#899da3,#8a9ca5,#8c9ca7,#8e9aa9,#9199aa,#9498aa,#9897a9,#9b96a8,#9f95a5,#a294a3,#a593a0,#a7939c,#a89298)"></div><div style="left:112.00px;top:108.50px;width:32.00px;height:31.00px;border-radius:50%;background:conic-gradient(from 90deg,#a69398,#a79395,#a79492,#a7948f,#a6958d,#a4968b,#a2978a,#a0988a,#9d998a,#9a9a8a,#979b8c,#949c8e,#919d90,#8e9e93,#8d9e96,#8b9e99,#8a9e9c,#8a9d9f,#8b9da2,#8b9ca4,#8d9ba6,#8f9aa7,#9299a8,#9598a8,#9897a7,#9b96a6,#9e95a4,#a194a2,#a3949f,#a5939c,#a69398)"></div><div style="left:114.00px;top:110.44px;width:28.00px;height:27.12px;border-radius:50%;background:conic-gradient(from 90deg,#a59498,#a59496,#a69493,#a59590,#a4968e,#a3968d,#a1978c,#9f988c,#9c998c,#9a9a8c,#979b8d,#949c8f,#929d91,#909d94,#8e9d97,#8d9d99,#8c9d9c,#8c9d9e,#8c9ca1,#8d9ca3,#8f9ba4,#909aa5,#9399a6,#9598a6,#9897a5,#9b96a4,#9d96a3,#a095a1,#a2949e,#a4949b,#a59498)"></div><div style="left:116.00px;top:112.38px;width:24.00px;height:23.25px;border-radius:50%;background:conic-gradient(from 90deg,#a39598,#a49596,#a49594,#a39692,#a39690,#a1978f,#a0988e,#9e988d,#9c998e,#9a9a8e,#979b8f,#959b90,#939c92,#919c95,#909d97,#8f9d99,#8e9c9c,#8e9c9e,#8e9ca0,#8f9ba1,#909ba3,#929aa4,#9499a4,#9698a4,#9898a4,#9a97a3,#9d96a1,#9f959f,#a1959d,#a2959b,#a39598)"></div><div style="left:118.00px;top:114.31px;width:20.00px;height:19.38px;border-radius:50%;background:conic-gradient(from 90deg,#a19599,#a29696,#a29695,#a29693,#a19791,#a09790,#9f9890,#9d988f,#9b998f,#9a9a90,#989a91,#969b92,#949c93,#929c95,#919c97,#909c99,#909c9b,#909c9d,#909b9f,#919ba0,#919aa1,#939aa2,#9499a2,#9698a2,#9898a2,#9a97a1,#9c97a0,#9e969e,#9f969d,#a1959b,#a19599)"></div><div style="left:120.00px;top:116.25px;width:16.00px;height:15.50px;border-radius:50%;background:conic-gradient(from 90deg,#a09699,#a09697,#a09695,#a09794,#9f9793,#9f9892,#9e9892,#9c9991,#9b9991,#999a92,#989a92,#969b93,#959b95,#949b96,#939b98,#929b99,#929b9b,#919b9c,#929b9d,#929b9f,#939aa0,#949aa0,#9599a0,#9799a0,#9898a0,#9a979f,#9b979e,#9d979d,#9e969c,#9f969a,#a09699)"></div><div style="left:122.00px;top:118.19px;width:12.00px;height:11.62px;border-radius:50%;background:conic-gradient(from 90deg,#9e9799,#9e9797,#9e9796,#9e9795,#9e9894,#9d9894,#9c9893,#9b9993,#9a9993,#999993,#989a94,#979a95,#969a96,#959b97,#949b98,#949b99,#939b9a,#939b9b,#939a9c,#949a9d,#949a9e,#95999e,#96999f,#97999f,#98989e,#9a989e,#9b989d,#9c979c,#9d979b,#9d979a,#9e9799)"></div><div style="left:124.00px;top:120.12px;width:8.00px;height:7.75px;border-radius:50%;background:conic-gradient(from 90deg,#9c9899,#9d9898,#9d9897,#9c9896,#9c9896,#9c9895,#9b9895,#9b9995,#9a9995,#999995,#989a96,#989a96,#979a97,#969a97,#969a98,#959a99,#959a9a,#959a9b,#959a9b,#969a9c,#969a9c,#96999d,#97999d,#98999d,#99989c,#99989c,#9a989c,#9b989b,#9b989a,#9c989a,#9c9899)"></div><div style="left:126.00px;top:122.06px;width:4.00px;height:3.88px;border-radius:50%;background:conic-gradient(from 90deg,#9b9899,#9b9898,#9b9898,#9b9898,#9b9897,#9a9997,#9a9997,#9a9997,#999997,#999997,#999997,#989997,#989998,#989998,#979a99,#979a99,#979a99,#97999a,#97999a,#97999a,#97999b,#98999b,#98999b,#98999b,#99999b,#99999a,#9a989a,#9a989a,#9a989a,#9a9899,#9b9899)"></div></div>
<div style="left:784px;top:555px;width:12px;height:12px;border:1.700px solid #0a0a0a;border-radius:50%;"></div>
<div style="left:1040px;top:393px;width:30px;height:256px;background:linear-gradient(to bottom,#ffffff,#0c8d5a 50%,#000000);"></div>
<div style="left:1040px;top:486px;width:30px;height:1px;background:#e8447c;"></div>
<div style="left:780px;top:653px;width:28px;height:26px;background:#262b34;border-radius:3px;"></div>
<svg style="left:786px;top:658px;" width="16" height="16" viewBox="0 0 16 16"><path d="M8 1.500a1.500 1.500 0 0 1 1.500 1.500v2h1v1.500h-5V5h1V3A1.500 1.500 0 0 1 8 1.500zM6.500 7.500h3v4.500L8 14.500 6.500 12z" fill="none" stroke="#e0e0e0" stroke-width="1.300"/><path d="M7 2.500h2v3H7z" fill="#e0e0e0"/></svg>
<div style="left:812px;top:653px;width:226px;height:25px;background:repeating-conic-gradient(#e0f4eb 0 25%,#70887e 0 50%) 0 0/16px 16px;"></div>
<svg style="left:1048px;top:658px;" width="16" height="16" viewBox="0 0 16 16"><circle cx="6" cy="8" r="5" fill="#e0e0e0"/><rect x="12.500" y="3" width="2" height="10" fill="#e0e0e0"/></svg>
<div style="left:780px;top:683px;width:83px;height:2px;background:#5b9bd3;"></div>
<div class="t" style="top:688.0px;height:20px;line-height:20px;font-size:14px;color:#62a6e4;left:781.5px;width:80px;text-align:center;">RGB</div>
<div style="left:867px;top:683px;width:83px;height:30px;background:#262b34;border-radius:3px;"></div>
<div class="t" style="top:688.0px;height:20px;line-height:20px;font-size:14px;color:#d0d1d5;left:868.5px;width:80px;text-align:center;">HSV</div>
<div style="left:954px;top:683px;width:84px;height:30px;background:#262b34;border-radius:3px;"></div>
<div class="t" style="top:688.0px;height:20px;line-height:20px;font-size:14px;color:#d0d1d5;left:956.0px;width:80px;text-align:center;">RAW</div>
<div class="t" style="top:688.0px;height:20px;line-height:20px;font-size:14px;color:#d0d1d5;left:1048px;">...</div>
<div class="t" style="top:725.0px;height:20px;line-height:20px;font-size:14px;color:#c9cbcf;left:784px;">R</div>
<div style="left:803px;top:725px;width:185px;height:16px;background:linear-gradient(to right,#00b574,#ffb574);"></div>
<svg style="left:809.3333333333334px;top:744px;" width="12" height="5" viewBox="0 0 12 5"><path d="M0 5L6 0l6 5z" fill="#e6e6e6"/></svg>
<div style="left:992px;top:721px;width:63px;height:29px;background:#262b34;border-radius:3px;border-bottom:2px solid #20242c;"></div>
<div class="t" style="top:725.0px;height:20px;line-height:20px;font-size:14px;color:#d0d1d5;right:36px;text-align:right;">17</div>
<svg style="left:1056px;top:726px;" width="12" height="18" viewBox="0 0 12 18"><path d="M2 6.500l4-4 4 4M2 11.500l4 4 4-4" stroke="#d8d8d8" stroke-width="1.800" fill="none"/></svg>
<div class="t" style="top:757.0px;height:20px;line-height:20px;font-size:14px;color:#c9cbcf;left:784px;">G</div>
<div style="left:803px;top:757px;width:185px;height:16px;background:linear-gradient(to right,#110074,#11ff74);"></div>
<svg style="left:928.313725490196px;top:776px;" width="12" height="5" viewBox="0 0 12 5"><path d="M0 5L6 0l6 5z" fill="#e6e6e6"/></svg>
<div style="left:992px;top:753px;width:63px;height:29px;background:#262b34;border-radius:3px;border-bottom:2px solid #20242c;"></div>
<div class="t" style="top:757.0px;height:20px;line-height:20px;font-size:14px;color:#d0d1d5;right:36px;text-align:right;">181</div>
<svg style="left:1056px;top:758px;" width="12" height="18" viewBox="0 0 12 18"><path d="M2 6.500l4-4 4 4M2 11.500l4 4 4-4" stroke="#d8d8d8" stroke-width="1.800" fill="none"/></svg>
<div class="t" style="top:789.0px;height:20px;line-height:20px;font-size:14px;color:#c9cbcf;left:784px;">B</div>
<div style="left:803px;top:789px;width:185px;height:16px;background:linear-gradient(to right,#11b500,#11b5ff);"></div>
<svg style="left:881.156862745098px;top:808px;" width="12" height="5" viewBox="0 0 12 5"><path d="M0 5L6 0l6 5z" fill="#e6e6e6"/></svg>
<div style="left:992px;top:785px;width:63px;height:29px;background:#262b34;border-radius:3px;border-bottom:2px solid #20242c;"></div>
<div class="t" style="top:789.0px;height:20px;line-height:20px;font-size:14px;color:#d0d1d5;right:36px;text-align:right;">116</div>
<svg style="left:1056px;top:790px;" width="12" height="18" viewBox="0 0 12 18"><path d="M2 6.500l4-4 4 4M2 11.500l4 4 4-4" stroke="#d8d8d8" stroke-width="1.800" fill="none"/></svg>
<div class="t" style="top:821.0px;height:20px;line-height:20px;font-size:14px;color:#c9cbcf;left:784px;">A</div>
<div style="left:803px;top:821px;width:185px;height:16px;background:linear-gradient(to right,rgba(17,181,116,0),rgba(17,181,116,1)),repeating-conic-gradient(#ffffff 0 25%,#808080 0 50%) 0 0/16px 16px;"></div>
<svg style="left:820.2156862745098px;top:840px;" width="12" height="5" viewBox="0 0 12 5"><path d="M0 5L6 0l6 5z" fill="#e6e6e6"/></svg>
<div style="left:992px;top:817px;width:63px;height:29px;background:#262b34;border-radius:3px;border-bottom:2px solid #20242c;"></div>
<div class="t" style="top:821.0px;height:20px;line-height:20px;font-size:14px;color:#d0d1d5;right:36px;text-align:right;">32</div>
<svg style="left:1056px;top:822px;" width="12" height="18" viewBox="0 0 12 18"><path d="M2 6.500l4-4 4 4M2 11.500l4 4 4-4" stroke="#d8d8d8" stroke-width="1.800" fill="none"/></svg>
<div class="t" style="top:855.0px;height:20px;line-height:20px;font-size:14px;color:#c9cbcf;left:784px;">Hex</div>
<div style="left:818px;top:852px;width:28px;height:28px;background:#262b34;border-radius:3px;"></div>
<div class="t" style="top:856.0px;height:20px;line-height:20px;font-size:14px;color:#d0d1d5;left:818.0px;width:28px;text-align:center;">#</div>
<div style="left:850px;top:851px;width:220px;height:29px;background:#20252d;border:2px solid #70bafa;border-radius:3px;"></div>
<div style="left:856px;top:857px;width:65px;height:16px;background:#446487;"></div>
<div class="t" style="top:855.0px;height:20px;line-height:20px;font-size:14px;color:#d8dadd;letter-spacing:.2px;left:857px;">11b57420</div>
<svg style="left:789px;top:893px;" width="8" height="10" viewBox="0 0 8 10"><path d="M2 1.500l3.500 3.500L2 8.500" stroke="#7b7f88" stroke-width="1.500" fill="none"/></svg>
<div class="t" style="top:888.0px;height:20px;line-height:20px;font-size:14px;color:#c3c5c9;letter-spacing:.2px;left:806px;">Swatches</div>
<svg style="left:789px;top:928px;" width="8" height="10" viewBox="0 0 8 10"><path d="M2 1.500l3.500 3.500L2 8.500" stroke="#7b7f88" stroke-width="1.500" fill="none"/></svg>
<div class="t" style="top:923.0px;height:20px;line-height:20px;font-size:14px;color:#c3c5c9;letter-spacing:.2px;left:806px;">Recent Colors</div>
<svg style="left:0;top:0" width="1082" height="952" viewBox="0 0 1082 952"><g fill="none" stroke-linecap="round" stroke-linejoin="round"><g stroke="#fff0f6" stroke-width="7"><path d="M217.5,234.0 C209.6,241.2 185.6,261.4 170.3,277.4 C155.1,293.4 137.8,312.4 126.0,330.0 C114.2,347.6 105.7,366.0 99.7,383.0 C93.7,400.0 91.3,416.3 90.0,431.8 C88.7,447.3 89.5,459.8 91.8,476.0 C94.1,492.2 98.3,512.2 104.0,529.0 C109.7,545.8 117.7,561.0 126.0,577.0 C134.3,593.0 149.3,617.0 154.0,625.0"/><path d="M521,487.500L563,548"/><rect x="537.500" y="550" width="107" height="39" rx="10"/><rect x="765" y="538.500" width="57" height="37" rx="9"/><path d="M818.500,537.500L850.500,518.800"/><path d="M784,577.500L515.500,753"/><rect x="776.500" y="809.400" width="228" height="43" rx="11"/><path d="M541.400,782.900L776.500,831.700"/><path d="M784,853.500L757.300,893.800"/></g><g stroke="#ff0566" stroke-width="3.300"><path d="M217.5,234.0 C209.6,241.2 185.6,261.4 170.3,277.4 C155.1,293.4 137.8,312.4 126.0,330.0 C114.2,347.6 105.7,366.0 99.7,383.0 C93.7,400.0 91.3,416.3 90.0,431.8 C88.7,447.3 89.5,459.8 91.8,476.0 C94.1,492.2 98.3,512.2 104.0,529.0 C109.7,545.8 117.7,561.0 126.0,577.0 C134.3,593.0 149.3,617.0 154.0,625.0"/><path d="M521,487.500L563,548"/><rect x="537.500" y="550" width="107" height="39" rx="10"/><rect x="765" y="538.500" width="57" height="37" rx="9"/><path d="M818.500,537.500L850.500,518.800"/><path d="M784,577.500L515.500,753"/><rect x="776.500" y="809.400" width="228" height="43" rx="11"/><path d="M541.400,782.900L776.500,831.700"/><path d="M784,853.500L757.300,893.800"/></g></g><defs><filter id="ol" x="-5%" y="-25%" width="110%" height="150%"><feMorphology in="SourceAlpha" operator="dilate" radius="1.500" result="d"/><feGaussianBlur in="d" stdDeviation="0.450" result="b"/><feFlood flood-color="#ffe9f2"/><feComposite in2="b" operator="in" result="o"/><feMerge><feMergeNode in="o"/><feMergeNode in="SourceGraphic"/></feMerge></filter></defs><text x="120" y="663" font-size="32.2" font-weight="500" fill="#ff0566" stroke="#ff0566" stroke-width="0.6" stroke-linejoin="round" letter-spacing="0" xml:space="preserve" filter="url(#ol)"><tspan font-size="30.9" style="font-family:'DejaVu Sans',sans-serif" font-weight="400" stroke-width="0.9" letter-spacing="-1.1">panel </tspan><tspan dx="5">に割り当てた</tspan></text><text x="120" y="710" font-size="32.2" font-weight="500" fill="#ff0566" stroke="#ff0566" stroke-width="0.6" stroke-linejoin="round" letter-spacing="0" xml:space="preserve" filter="url(#ol)"><tspan>新規</tspan><tspan font-size="30.9" style="font-family:'DejaVu Sans',sans-serif" font-weight="400" stroke-width="0.9" letter-spacing="0.35"> StyleBoxFlat </tspan><tspan>で</tspan></text><text x="120" y="757" font-size="32.2" font-weight="500" fill="#ff0566" stroke="#ff0566" stroke-width="0.6" stroke-linejoin="round" letter-spacing="0" xml:space="preserve" filter="url(#ol)"><tspan font-size="30.9" style="font-family:'DejaVu Sans',sans-serif" font-weight="400" stroke-width="0.9" letter-spacing="0.3">PanelContainer </tspan><tspan>の色を</tspan></text><text x="120" y="806" font-size="32.2" font-weight="500" fill="#ff0566" stroke="#ff0566" stroke-width="0.6" stroke-linejoin="round" letter-spacing="0" xml:space="preserve" filter="url(#ol)"><tspan>半透明の緑に変更しました。</tspan></text><text x="431" y="478" font-size="24.3" font-weight="500" fill="#ff0566" stroke="#ff0566" stroke-width="0.6" stroke-linejoin="round" letter-spacing="0" xml:space="preserve" filter="url(#ol)"><tspan font-size="23.3" style="font-family:'DejaVu Sans',sans-serif" font-weight="400" stroke-width="0.9" letter-spacing="0">(1) </tspan><tspan>ダブルクリック</tspan></text><text x="814" y="509" font-size="24.3" font-weight="500" fill="#ff0566" stroke="#ff0566" stroke-width="0.6" stroke-linejoin="round" letter-spacing="0" xml:space="preserve" filter="url(#ol)"><tspan font-size="23.3" style="font-family:'DejaVu Sans',sans-serif" font-weight="400" stroke-width="0.9" letter-spacing="0">(2) </tspan><tspan>色を選択</tspan></text><text x="693" y="921" font-size="24.3" font-weight="500" fill="#ff0566" stroke="#ff0566" stroke-width="0.6" stroke-linejoin="round" letter-spacing="0" xml:space="preserve" filter="url(#ol)"><tspan font-size="23.3" style="font-family:'DejaVu Sans',sans-serif" font-weight="400" stroke-width="0.9" letter-spacing="0">(3) </tspan><tspan>不透明度を選択</tspan></text></svg>
</div></body></html>
